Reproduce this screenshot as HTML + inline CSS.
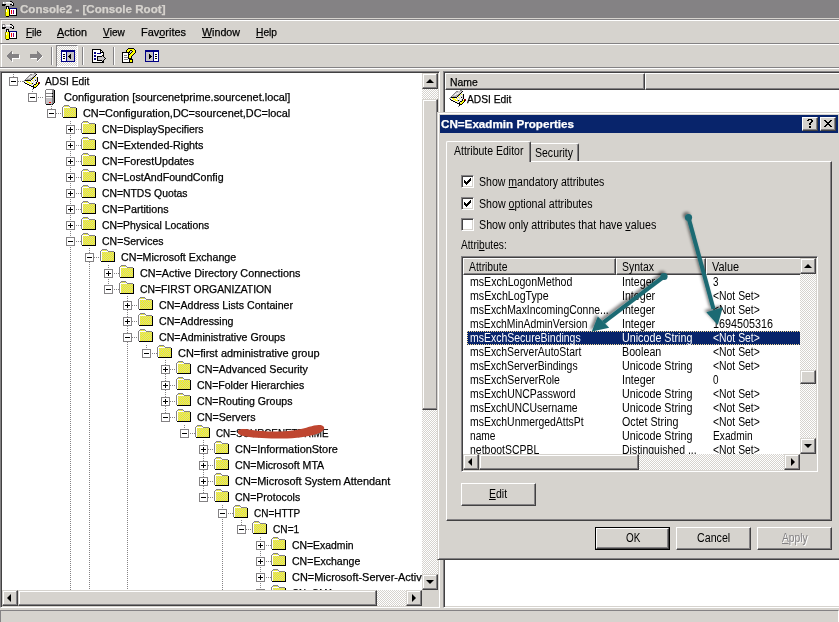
<!DOCTYPE html>
<html><head><meta charset="utf-8"><title>Console2</title>
<style>
*{box-sizing:border-box;margin:0;padding:0}
html,body{width:839px;height:622px;overflow:hidden;background:#D6D3CE}
body{position:relative;font-family:"Liberation Sans",sans-serif;font-size:11px;color:#000;line-height:13px}
#w{position:absolute;left:0;top:0;width:839px;height:622px;overflow:hidden;will-change:transform}
.a{position:absolute}
.t{position:absolute;white-space:pre;height:13px;line-height:13px;transform-origin:0 0;-webkit-text-stroke:.25px currentColor}
u{text-decoration:none;border-bottom:1px solid currentColor;display:inline-block;line-height:10px;height:11px}
.chk{background-image:conic-gradient(#fff 25%,#D6D3CE 0 50%,#fff 0 75%,#D6D3CE 0);background-size:2px 2px}
.btn{position:absolute;background:#D6D3CE;border:1px solid;border-color:#fff #424142 #424142 #fff;box-shadow:inset -1px -1px #848284,inset 1px 1px #D6D3CE}
.sb{position:absolute;width:16px;height:16px;background:#D6D3CE;border:1px solid;border-color:#D6D3CE #424142 #424142 #D6D3CE;box-shadow:inset -1px -1px #848284,inset 1px 1px #fff}
.sunk{position:absolute;border:1px solid;border-color:#848284 #fff #fff #848284;box-shadow:inset 1px 1px #424142,inset -1px -1px #D6D3CE}
.ms{position:absolute;white-space:pre;font-size:12.5px;line-height:14px;height:14px;transform-origin:0 0;transform:scaleX(.87)}
.vl{position:absolute;width:1px;background-image:linear-gradient(#848284 50%,transparent 0);background-size:1px 2px}
.hl{position:absolute;height:1px;background-image:linear-gradient(90deg,#848284 50%,transparent 0);background-size:2px 1px}
.bx{position:absolute;width:9px;height:9px;border:1px solid #848284;background:#fff}
.bx i{position:absolute;left:1px;top:3px;width:5px;height:1px;background:#000}
.bx b{position:absolute;left:3px;top:1px;width:1px;height:5px;background:#000}
.sep{position:absolute;width:2px;border-left:1px solid #848284;border-right:1px solid #fff}
.ar{position:absolute;width:0;height:0;border:4px solid transparent}
</style></head>
<body><div id="w">
<div class="a" style="left:0;top:0;width:839px;height:18px;background:#848284"></div>
<svg class="a" style="left:2px;top:1px" width="16" height="16" viewBox="0 0 16 16" shape-rendering="crispEdges"><path fill="#848284" d="M0 0h3v1h-3zM0 1h1v1h-1zM0 2h1v1h-1z"/><path fill="#000000" d="M8 0h2v1h-2zM10 1h1v1h-1zM11 2h1v1h-1zM0 3h4v1h-4zM8 3h2v1h-2zM11 3h1v1h-1zM0 4h3v1h-3zM10 4h2v1h-2zM4 5h3v1h-3zM4 6h1v1h-1zM6 6h1v1h-1zM4 7h1v1h-1zM6 7h1v1h-1zM7 8h1v1h-1zM14 8h1v1h-1zM7 9h1v1h-1zM14 9h1v1h-1zM7 10h1v1h-1zM14 10h1v1h-1zM7 11h1v1h-1zM14 11h1v1h-1zM7 12h1v1h-1zM14 12h1v1h-1zM7 13h1v1h-1zM14 13h1v1h-1zM7 14h8v1h-8zM4 15h3v1h-3z"/><path fill="#FFFFFF" d="M1 1h1v1h-1zM4 1h5v1h-5zM1 2h1v1h-1zM10 2h1v1h-1zM10 3h1v1h-1zM5 6h1v1h-1zM5 7h1v1h-1zM8 8h6v1h-6zM4 9h1v1h-1zM8 9h1v1h-1zM10 9h1v1h-1zM12 9h2v1h-2zM4 10h1v1h-1zM8 10h1v1h-1zM10 10h1v1h-1zM12 10h2v1h-2zM8 11h1v1h-1zM10 11h1v1h-1zM12 11h2v1h-2zM8 12h1v1h-1zM10 12h1v1h-1zM12 12h2v1h-2zM8 13h6v1h-6z"/><path fill="#C6C3C6" d="M2 1h2v1h-2zM9 1h1v1h-1zM2 2h2v1h-2zM8 2h2v1h-2zM4 3h4v1h-4zM4 4h4v1h-4z"/><path fill="#DCDCDC" d="M4 2h4v1h-4z"/><path fill="#000084" d="M7 7h8v1h-8z"/><path fill="#848200" d="M3 8h1v1h-1zM3 9h1v1h-1zM3 10h1v1h-1zM3 11h1v1h-1zM3 12h1v1h-1zM3 13h1v1h-1zM3 14h1v1h-1z"/><path fill="#FFFF00" d="M4 8h3v1h-3zM5 9h2v1h-2zM5 10h2v1h-2zM4 11h3v1h-3zM4 12h3v1h-3zM4 13h3v1h-3zM4 14h3v1h-3z"/><path fill="#FF0000" d="M9 9h1v1h-1zM9 10h1v1h-1zM9 11h1v1h-1zM9 12h1v1h-1z"/><path fill="#840084" d="M11 9h1v1h-1zM11 10h1v1h-1zM11 11h1v1h-1zM11 12h1v1h-1z"/></svg>
<div class="t" style="left:20px;top:3px;font-weight:700;transform:scaleX(1.0535);color:#D6D3CE">Console2 - [Console Root]</div>
<div class="a" style="left:0;top:19px;width:839px;height:1px;background:#848284"></div>
<div class="a" style="left:1px;top:20px;width:838px;height:1px;background:#fff"></div>
<div class="a" style="left:1px;top:20px;width:1px;height:47px;background:#fff"></div>
<div class="a" style="left:0;top:43px;width:839px;height:1px;background:#848284"></div>
<div class="a" style="left:1px;top:44px;width:838px;height:1px;background:#fff"></div>
<div class="a" style="left:0;top:67px;width:839px;height:1px;background:#848284"></div>
<div class="a" style="left:0;top:68px;width:839px;height:1px;background:#fff"></div>
<svg class="a" style="left:2px;top:24px" width="16" height="16" viewBox="0 0 16 16" shape-rendering="crispEdges"><path fill="#848284" d="M0 0h3v1h-3zM0 1h1v1h-1zM0 2h1v1h-1z"/><path fill="#000000" d="M8 0h2v1h-2zM10 1h1v1h-1zM11 2h1v1h-1zM0 3h4v1h-4zM8 3h2v1h-2zM11 3h1v1h-1zM0 4h3v1h-3zM10 4h2v1h-2zM4 5h3v1h-3zM4 6h1v1h-1zM6 6h1v1h-1zM4 7h1v1h-1zM6 7h1v1h-1zM7 8h1v1h-1zM14 8h1v1h-1zM7 9h1v1h-1zM14 9h1v1h-1zM7 10h1v1h-1zM14 10h1v1h-1zM7 11h1v1h-1zM14 11h1v1h-1zM7 12h1v1h-1zM14 12h1v1h-1zM7 13h1v1h-1zM14 13h1v1h-1zM7 14h8v1h-8zM4 15h3v1h-3z"/><path fill="#FFFFFF" d="M1 1h1v1h-1zM4 1h5v1h-5zM1 2h1v1h-1zM10 2h1v1h-1zM10 3h1v1h-1zM5 6h1v1h-1zM5 7h1v1h-1zM8 8h6v1h-6zM4 9h1v1h-1zM8 9h1v1h-1zM10 9h1v1h-1zM12 9h2v1h-2zM4 10h1v1h-1zM8 10h1v1h-1zM10 10h1v1h-1zM12 10h2v1h-2zM8 11h1v1h-1zM10 11h1v1h-1zM12 11h2v1h-2zM8 12h1v1h-1zM10 12h1v1h-1zM12 12h2v1h-2zM8 13h6v1h-6z"/><path fill="#C6C3C6" d="M2 1h2v1h-2zM9 1h1v1h-1zM2 2h2v1h-2zM8 2h2v1h-2zM4 3h4v1h-4zM4 4h4v1h-4z"/><path fill="#DCDCDC" d="M4 2h4v1h-4z"/><path fill="#000084" d="M7 7h8v1h-8z"/><path fill="#848200" d="M3 8h1v1h-1zM3 9h1v1h-1zM3 10h1v1h-1zM3 11h1v1h-1zM3 12h1v1h-1zM3 13h1v1h-1zM3 14h1v1h-1z"/><path fill="#FFFF00" d="M4 8h3v1h-3zM5 9h2v1h-2zM5 10h2v1h-2zM4 11h3v1h-3zM4 12h3v1h-3zM4 13h3v1h-3zM4 14h3v1h-3z"/><path fill="#FF0000" d="M9 9h1v1h-1zM9 10h1v1h-1zM9 11h1v1h-1zM9 12h1v1h-1z"/><path fill="#840084" d="M11 9h1v1h-1zM11 10h1v1h-1zM11 11h1v1h-1zM11 12h1v1h-1z"/></svg>
<div class="t" style="left:26px;top:26px;transform:scaleX(0.8853);"><u>F</u>ile</div>
<div class="t" style="left:57px;top:26px;transform:scaleX(0.9811);"><u>A</u>ction</div>
<div class="t" style="left:103px;top:26px;transform:scaleX(0.9131);"><u>V</u>iew</div>
<div class="t" style="left:141px;top:26px;transform:scaleX(0.9945);">Fav<u>o</u>rites</div>
<div class="t" style="left:202px;top:26px;transform:scaleX(0.9712);"><u>W</u>indow</div>
<div class="t" style="left:256px;top:26px;transform:scaleX(0.9282);"><u>H</u>elp</div>
<svg class="a" style="left:7px;top:51px" width="13" height="11" viewBox="0 0 13 11" shape-rendering="crispEdges"><path fill="#848284" d="M4 0h1v1h-1zM3 1h2v1h-2zM2 2h3v1h-3zM1 3h11v1h-11zM0 4h12v1h-12zM0 5h12v1h-12zM1 6h11v1h-11zM2 7h3v1h-3zM3 8h2v1h-2zM4 9h1v1h-1z"/><path fill="#FFFFFF" d="M5 1h1v1h-1zM5 2h1v1h-1zM12 4h1v1h-1zM12 5h1v1h-1zM12 6h1v1h-1zM5 7h8v1h-8zM5 8h1v1h-1zM5 9h1v1h-1zM5 10h1v1h-1z"/></svg>
<svg class="a" style="left:30px;top:51px" width="13" height="11" viewBox="0 0 13 11" shape-rendering="crispEdges"><path fill="#848284" d="M7 0h1v1h-1zM7 1h2v1h-2zM7 2h3v1h-3zM0 3h11v1h-11zM0 4h12v1h-12zM0 5h12v1h-12zM0 6h11v1h-11zM7 7h3v1h-3zM7 8h2v1h-2zM7 9h1v1h-1z"/><path fill="#FFFFFF" d="M12 5h1v1h-1zM11 6h1v1h-1zM1 7h6v1h-6zM10 7h1v1h-1zM9 8h1v1h-1zM8 9h1v1h-1zM7 10h1v1h-1z"/></svg>
<div class="sep" style="left:51px;top:47px;height:18px"></div>
<div class="a chk" style="left:56px;top:45px;width:22px;height:22px;border:1px solid;border-color:#848284 #fff #fff #848284"></div>
<svg class="a" style="left:61px;top:50px" width="14" height="12" viewBox="0 0 14 12" shape-rendering="crispEdges"><path fill="#000084" d="M0 0h14v1h-14zM0 1h14v1h-14zM0 2h1v1h-1zM5 2h1v1h-1zM13 2h1v1h-1zM0 3h1v1h-1zM5 3h1v1h-1zM13 3h1v1h-1zM0 4h1v1h-1zM5 4h1v1h-1zM13 4h1v1h-1zM0 5h1v1h-1zM5 5h1v1h-1zM13 5h1v1h-1zM0 6h1v1h-1zM5 6h1v1h-1zM13 6h1v1h-1zM0 7h1v1h-1zM5 7h1v1h-1zM13 7h1v1h-1zM0 8h1v1h-1zM5 8h1v1h-1zM13 8h1v1h-1zM0 9h1v1h-1zM5 9h1v1h-1zM13 9h1v1h-1zM0 10h1v1h-1zM5 10h1v1h-1zM13 10h1v1h-1zM0 11h14v1h-14z"/><path fill="#FFFFFF" d="M1 2h4v1h-4zM1 3h4v1h-4zM1 4h1v1h-1zM4 4h1v1h-1zM1 5h4v1h-4zM1 6h1v1h-1zM4 6h1v1h-1zM1 7h4v1h-4zM1 8h1v1h-1zM4 8h1v1h-1zM1 9h4v1h-4zM1 10h4v1h-4z"/><path fill="#C6C3C6" d="M6 2h7v1h-7zM6 3h7v1h-7zM6 4h3v1h-3zM10 4h3v1h-3zM6 5h2v1h-2zM10 5h3v1h-3zM6 6h1v1h-1zM10 6h3v1h-3zM6 7h2v1h-2zM10 7h3v1h-3zM6 8h3v1h-3zM10 8h3v1h-3zM6 9h7v1h-7zM6 10h7v1h-7z"/><path fill="#000000" d="M2 4h2v1h-2zM9 4h1v1h-1zM8 5h2v1h-2zM2 6h2v1h-2zM7 6h3v1h-3zM8 7h2v1h-2zM2 8h2v1h-2zM9 8h1v1h-1z"/></svg>
<div class="sep" style="left:82px;top:47px;height:18px"></div>
<svg class="a" style="left:92px;top:49px" width="14" height="14" viewBox="0 0 14 14" shape-rendering="crispEdges"><path fill="#000000" d="M0 0h9v1h-9zM0 1h1v1h-1zM8 1h2v1h-2zM0 2h1v1h-1zM8 2h1v1h-1zM10 2h1v1h-1zM0 3h1v1h-1zM8 3h4v1h-4zM0 4h1v1h-1zM11 4h1v1h-1zM0 5h1v1h-1zM11 5h1v1h-1zM0 6h1v1h-1zM10 6h2v1h-2zM0 7h1v1h-1zM5 7h5v1h-5zM11 7h1v1h-1zM0 8h1v1h-1zM5 8h1v1h-1zM12 8h1v1h-1zM0 9h1v1h-1zM5 9h1v1h-1zM13 9h1v1h-1zM0 10h1v1h-1zM5 10h1v1h-1zM12 10h1v1h-1zM0 11h1v1h-1zM5 11h5v1h-5zM11 11h1v1h-1zM0 12h1v1h-1zM10 12h2v1h-2zM0 13h12v1h-12z"/><path fill="#FFFFFF" d="M1 1h7v1h-7zM1 2h7v1h-7zM9 2h1v1h-1zM1 3h1v1h-1zM4 3h4v1h-4zM1 4h1v1h-1zM4 4h1v1h-1zM9 4h2v1h-2zM1 5h10v1h-10zM1 6h1v1h-1zM4 6h6v1h-6zM1 7h1v1h-1zM4 7h1v1h-1zM1 8h4v1h-4zM1 9h1v1h-1zM4 9h1v1h-1zM1 10h1v1h-1zM4 10h1v1h-1zM1 11h4v1h-4zM1 12h9v1h-9z"/><path fill="#000084" d="M2 3h2v1h-2zM2 4h2v1h-2zM5 4h4v1h-4zM2 6h2v1h-2zM2 7h2v1h-2zM2 9h2v1h-2zM2 10h2v1h-2z"/><path fill="#C6C3C6" d="M10 7h1v1h-1zM6 8h6v1h-6zM6 9h7v1h-7zM6 10h6v1h-6zM10 11h1v1h-1z"/></svg>
<div class="sep" style="left:113px;top:47px;height:18px"></div>
<svg class="a" style="left:122px;top:48px" width="15" height="15" viewBox="0 0 15 15" shape-rendering="crispEdges"><path fill="#000000" d="M6 0h6v1h-6zM5 1h1v1h-1zM12 1h1v1h-1zM4 2h1v1h-1zM8 2h2v1h-2zM13 2h1v1h-1zM4 3h1v1h-1zM7 3h1v1h-1zM10 3h1v1h-1zM13 3h1v1h-1zM0 4h8v1h-8zM9 4h1v1h-1zM13 4h1v1h-1zM0 5h1v1h-1zM6 5h1v1h-1zM8 5h1v1h-1zM12 5h1v1h-1zM0 6h1v1h-1zM6 6h2v1h-2zM11 6h1v1h-1zM0 7h1v1h-1zM6 7h1v1h-1zM10 7h1v1h-1zM0 8h1v1h-1zM6 8h1v1h-1zM9 8h1v1h-1zM0 9h1v1h-1zM6 9h1v1h-1zM9 9h1v1h-1zM0 10h1v1h-1zM6 10h4v1h-4zM0 11h1v1h-1zM7 11h4v1h-4zM0 12h1v1h-1zM7 12h1v1h-1zM10 12h1v1h-1zM0 13h1v1h-1zM7 13h1v1h-1zM10 13h1v1h-1zM0 14h11v1h-11z"/><path fill="#FFFF00" d="M6 1h6v1h-6zM5 2h3v1h-3zM10 2h3v1h-3zM5 3h2v1h-2zM11 3h2v1h-2zM10 4h3v1h-3zM9 5h3v1h-3zM8 6h3v1h-3zM7 7h3v1h-3zM7 8h2v1h-2zM7 9h2v1h-2zM8 12h2v1h-2zM8 13h2v1h-2z"/><path fill="#FFFFFF" d="M1 5h5v1h-5zM1 6h5v1h-5zM1 7h1v1h-1zM5 7h1v1h-1zM1 8h5v1h-5zM1 9h1v1h-1zM1 10h5v1h-5zM1 11h1v1h-1zM6 11h1v1h-1zM1 12h6v1h-6zM1 13h6v1h-6z"/><path fill="#848284" d="M2 7h3v1h-3zM2 9h4v1h-4zM2 11h4v1h-4z"/></svg>
<svg class="a" style="left:145px;top:50px" width="14" height="12" viewBox="0 0 14 12" shape-rendering="crispEdges"><path fill="#000084" d="M0 0h14v1h-14zM0 1h14v1h-14zM0 2h1v1h-1zM8 2h1v1h-1zM13 2h1v1h-1zM0 3h1v1h-1zM8 3h1v1h-1zM13 3h1v1h-1zM0 4h1v1h-1zM8 4h1v1h-1zM13 4h1v1h-1zM0 5h1v1h-1zM8 5h1v1h-1zM13 5h1v1h-1zM0 6h1v1h-1zM8 6h1v1h-1zM13 6h1v1h-1zM0 7h1v1h-1zM8 7h1v1h-1zM13 7h1v1h-1zM0 8h1v1h-1zM8 8h1v1h-1zM13 8h1v1h-1zM0 9h1v1h-1zM8 9h1v1h-1zM13 9h1v1h-1zM0 10h1v1h-1zM8 10h1v1h-1zM13 10h1v1h-1zM0 11h14v1h-14z"/><path fill="#C6C3C6" d="M1 2h7v1h-7zM1 3h7v1h-7zM1 4h3v1h-3zM5 4h3v1h-3zM1 5h3v1h-3zM6 5h2v1h-2zM1 6h3v1h-3zM7 6h1v1h-1zM1 7h3v1h-3zM6 7h2v1h-2zM1 8h3v1h-3zM5 8h3v1h-3zM1 9h7v1h-7zM1 10h7v1h-7z"/><path fill="#FFFFFF" d="M9 2h4v1h-4zM9 3h4v1h-4zM9 4h1v1h-1zM12 4h1v1h-1zM9 5h4v1h-4zM9 6h1v1h-1zM12 6h1v1h-1zM9 7h4v1h-4zM9 8h1v1h-1zM12 8h1v1h-1zM9 9h4v1h-4zM9 10h4v1h-4z"/><path fill="#000000" d="M4 4h1v1h-1zM10 4h2v1h-2zM4 5h2v1h-2zM4 6h3v1h-3zM10 6h2v1h-2zM4 7h2v1h-2zM4 8h1v1h-1zM10 8h2v1h-2z"/></svg>
<div class="a" style="left:0;top:71px;width:440px;height:537px;background:#fff;border:1px solid;border-color:#848284 #fff #fff #848284;box-shadow:inset 1px 1px #424142,inset -1px -1px #D6D3CE"></div>
<div class="a" style="left:2px;top:73px;width:420px;height:517px;overflow:hidden">
<div class="hl" style="left:16px;top:8px;width:6px"></div>
<div class="vl" style="left:11px;top:1px;height:3px"></div>
<div class="bx" style="left:7px;top:4px"><i></i></div>
<svg class="a" style="left:21px;top:0px" width="17" height="17" viewBox="0 0 17 17" shape-rendering="crispEdges"><path fill="#848284" d="M11 0h2v1h-2zM7 1h2v1h-2zM6 2h1v1h-1zM5 3h1v1h-1zM4 4h1v1h-1zM3 5h1v1h-1zM2 6h1v1h-1zM1 7h1v1h-1zM0 8h1v1h-1zM9 16h1v1h-1z"/><path fill="#C6C3C6" d="M9 1h4v1h-4zM7 2h2v1h-2zM10 2h1v1h-1zM6 3h1v1h-1zM10 3h1v1h-1zM5 4h1v1h-1zM8 4h1v1h-1zM4 5h1v1h-1zM6 5h1v1h-1zM3 6h1v1h-1zM7 6h1v1h-1z"/><path fill="#000000" d="M13 1h1v1h-1zM12 2h1v1h-1zM11 3h1v1h-1zM10 4h1v1h-1zM14 4h1v1h-1zM9 5h1v1h-1zM14 5h1v1h-1zM8 6h1v1h-1zM14 6h1v1h-1zM2 7h6v1h-6zM12 7h1v1h-1zM14 7h1v1h-1zM14 8h1v1h-1zM1 9h1v1h-1zM13 9h1v1h-1zM2 10h2v1h-2zM9 10h1v1h-1zM13 10h1v1h-1zM15 10h1v1h-1zM4 11h2v1h-2zM11 11h2v1h-2zM15 11h1v1h-1zM6 12h2v1h-2zM10 12h1v1h-1zM14 12h1v1h-1zM8 13h3v1h-3zM13 13h1v1h-1zM10 14h3v1h-3zM10 15h1v1h-1z"/><path fill="#DCDCDC" d="M9 2h1v1h-1zM11 2h1v1h-1zM7 3h1v1h-1zM9 3h1v1h-1zM12 3h1v1h-1zM7 4h1v1h-1zM11 4h1v1h-1zM13 4h1v1h-1zM5 5h1v1h-1zM11 5h1v1h-1zM13 5h1v1h-1zM9 6h1v1h-1zM11 6h3v1h-3zM10 7h1v1h-1zM13 7h1v1h-1zM1 8h1v1h-1zM5 8h1v1h-1zM8 8h1v1h-1zM10 8h2v1h-2zM13 8h1v1h-1zM2 9h1v1h-1zM8 9h1v1h-1zM10 9h1v1h-1zM12 9h1v1h-1zM4 10h1v1h-1zM10 10h1v1h-1zM12 10h1v1h-1zM6 11h1v1h-1zM8 11h2v1h-2zM8 12h1v1h-1zM11 12h1v1h-1z"/><path fill="#FFFFFF" d="M8 3h1v1h-1zM13 3h1v1h-1zM6 4h1v1h-1zM12 5h1v1h-1zM10 6h1v1h-1zM8 7h1v1h-1zM11 7h1v1h-1zM2 8h1v1h-1zM6 8h1v1h-1zM9 8h1v1h-1zM12 8h1v1h-1zM3 9h1v1h-1zM7 9h1v1h-1zM9 9h1v1h-1zM11 9h1v1h-1zM5 10h1v1h-1zM11 10h1v1h-1zM7 11h1v1h-1zM10 11h1v1h-1zM9 12h1v1h-1z"/><path fill="#A0A0A0" d="M9 4h1v1h-1zM7 5h2v1h-2zM4 6h3v1h-3z"/><path fill="#FFFF00" d="M12 4h1v1h-1zM10 5h1v1h-1zM9 7h1v1h-1zM3 8h2v1h-2zM7 8h1v1h-1zM4 9h3v1h-3zM6 10h3v1h-3zM14 10h1v1h-1zM13 11h2v1h-2zM12 12h2v1h-2zM11 13h2v1h-2z"/><path fill="#840000" d="M15 9h2v1h-2zM16 10h1v1h-1z"/></svg>
<div class="t" style="left:43px;top:2px;transform:scaleX(0.9311);">ADSI Edit</div>
<div class="hl" style="left:36px;top:24px;width:5px"></div>
<div class="vl" style="left:30px;top:16px;height:4px"></div>
<div class="bx" style="left:26px;top:20px"><i></i></div>
<svg class="a" style="left:43px;top:16px" width="11" height="16" viewBox="0 0 11 16" shape-rendering="crispEdges"><path fill="#848284" d="M1 0h8v1h-8zM0 1h1v1h-1zM7 1h2v1h-2zM0 2h1v1h-1zM7 2h2v1h-2zM0 3h1v1h-1zM7 3h2v1h-2zM0 4h7v1h-7zM8 4h1v1h-1zM0 5h1v1h-1zM7 5h2v1h-2zM0 6h1v1h-1zM7 6h2v1h-2zM0 7h7v1h-7zM8 7h1v1h-1zM0 8h1v1h-1zM7 8h2v1h-2zM0 9h1v1h-1zM7 9h2v1h-2zM0 10h1v1h-1zM7 10h2v1h-2zM0 11h1v1h-1zM7 11h2v1h-2zM0 12h1v1h-1zM7 12h2v1h-2zM0 13h1v1h-1zM7 13h2v1h-2zM0 14h1v1h-1zM7 14h1v1h-1z"/><path fill="#FFFFFF" d="M1 1h6v1h-6zM1 2h6v1h-6zM1 3h6v1h-6zM1 5h6v1h-6zM1 6h6v1h-6zM1 8h6v1h-6z"/><path fill="#000000" d="M9 1h1v1h-1zM9 2h1v1h-1zM9 3h1v1h-1zM7 4h1v1h-1zM9 4h1v1h-1zM9 5h1v1h-1zM9 6h1v1h-1zM7 7h1v1h-1zM9 7h1v1h-1zM9 8h1v1h-1zM9 9h1v1h-1zM9 10h1v1h-1zM9 11h1v1h-1zM9 12h1v1h-1zM9 13h1v1h-1zM8 14h1v1h-1zM1 15h7v1h-7z"/><path fill="#C6C3C6" d="M1 9h6v1h-6zM1 10h6v1h-6zM1 11h6v1h-6zM1 12h6v1h-6zM1 13h3v1h-3zM6 13h1v1h-1zM1 14h6v1h-6z"/><path fill="#FF0000" d="M4 13h2v1h-2z"/></svg>
<div class="t" style="left:62px;top:18px;transform:scaleX(0.9949);">Configuration [sourcenetprime.sourcenet.local]</div>
<div class="hl" style="left:54px;top:40px;width:6px"></div>
<div class="vl" style="left:49px;top:31px;height:5px"></div>
<div class="bx" style="left:45px;top:36px"><i></i></div>
<svg class="a" style="left:60px;top:32px" width="15" height="13" viewBox="0 0 15 13" shape-rendering="crispEdges"><path fill="#848284" d="M2 0h5v1h-5zM1 1h1v1h-1zM7 1h1v1h-1zM0 2h1v1h-1zM8 2h6v1h-6zM0 3h1v1h-1zM0 4h1v1h-1zM0 5h1v1h-1zM0 6h1v1h-1zM0 7h1v1h-1zM0 8h1v1h-1zM0 9h1v1h-1zM0 10h1v1h-1zM0 11h1v1h-1z"/><path fill="#CCCCAC" d="M2 1h1v1h-1zM4 1h1v1h-1zM6 1h1v1h-1zM3 3h1v1h-1zM5 3h1v1h-1zM7 3h1v1h-1zM9 3h1v1h-1zM11 3h1v1h-1zM13 3h1v1h-1zM2 4h1v1h-1zM4 4h1v1h-1zM6 4h1v1h-1zM8 4h1v1h-1zM10 4h1v1h-1zM12 4h1v1h-1zM3 5h1v1h-1zM5 5h1v1h-1zM7 5h1v1h-1zM9 5h1v1h-1zM11 5h1v1h-1zM13 5h1v1h-1zM2 6h1v1h-1zM4 6h1v1h-1zM6 6h1v1h-1zM8 6h1v1h-1zM10 6h1v1h-1zM12 6h1v1h-1zM3 7h1v1h-1zM5 7h1v1h-1zM7 7h1v1h-1zM9 7h1v1h-1zM11 7h1v1h-1zM13 7h1v1h-1zM2 8h1v1h-1zM4 8h1v1h-1zM6 8h1v1h-1zM8 8h1v1h-1zM10 8h1v1h-1zM12 8h1v1h-1zM3 9h1v1h-1zM5 9h1v1h-1zM7 9h1v1h-1zM9 9h1v1h-1zM11 9h1v1h-1zM13 9h1v1h-1zM2 10h1v1h-1zM4 10h1v1h-1zM6 10h1v1h-1zM8 10h1v1h-1zM10 10h1v1h-1zM12 10h1v1h-1zM3 11h1v1h-1zM5 11h1v1h-1zM7 11h1v1h-1zM9 11h1v1h-1zM11 11h1v1h-1zM13 11h1v1h-1z"/><path fill="#FFFF00" d="M3 1h1v1h-1zM5 1h1v1h-1zM2 3h1v1h-1zM4 3h1v1h-1zM6 3h1v1h-1zM8 3h1v1h-1zM10 3h1v1h-1zM12 3h1v1h-1zM3 4h1v1h-1zM5 4h1v1h-1zM7 4h1v1h-1zM9 4h1v1h-1zM11 4h1v1h-1zM13 4h1v1h-1zM2 5h1v1h-1zM4 5h1v1h-1zM6 5h1v1h-1zM8 5h1v1h-1zM10 5h1v1h-1zM12 5h1v1h-1zM3 6h1v1h-1zM5 6h1v1h-1zM7 6h1v1h-1zM9 6h1v1h-1zM11 6h1v1h-1zM13 6h1v1h-1zM2 7h1v1h-1zM4 7h1v1h-1zM6 7h1v1h-1zM8 7h1v1h-1zM10 7h1v1h-1zM12 7h1v1h-1zM3 8h1v1h-1zM5 8h1v1h-1zM7 8h1v1h-1zM9 8h1v1h-1zM11 8h1v1h-1zM13 8h1v1h-1zM2 9h1v1h-1zM4 9h1v1h-1zM6 9h1v1h-1zM8 9h1v1h-1zM10 9h1v1h-1zM12 9h1v1h-1zM3 10h1v1h-1zM5 10h1v1h-1zM7 10h1v1h-1zM9 10h1v1h-1zM11 10h1v1h-1zM13 10h1v1h-1zM2 11h1v1h-1zM4 11h1v1h-1zM6 11h1v1h-1zM8 11h1v1h-1zM10 11h1v1h-1zM12 11h1v1h-1z"/><path fill="#FFFFFF" d="M1 2h7v1h-7zM1 3h1v1h-1zM1 4h1v1h-1zM1 5h1v1h-1zM1 6h1v1h-1zM1 7h1v1h-1zM1 8h1v1h-1zM1 9h1v1h-1zM1 10h1v1h-1zM1 11h1v1h-1z"/><path fill="#000000" d="M14 3h1v1h-1zM14 4h1v1h-1zM14 5h1v1h-1zM14 6h1v1h-1zM14 7h1v1h-1zM14 8h1v1h-1zM14 9h1v1h-1zM14 10h1v1h-1zM14 11h1v1h-1zM1 12h14v1h-14z"/></svg>
<div class="t" style="left:81px;top:34px;transform:scaleX(0.9899);">CN=Configuration,DC=sourcenet,DC=local</div>
<div class="hl" style="left:74px;top:56px;width:5px"></div>
<div class="vl" style="left:68px;top:48px;height:4px"></div>
<div class="bx" style="left:64px;top:52px"><i></i><b></b></div>
<svg class="a" style="left:79px;top:48px" width="15" height="13" viewBox="0 0 15 13" shape-rendering="crispEdges"><path fill="#848284" d="M2 0h5v1h-5zM1 1h1v1h-1zM7 1h1v1h-1zM0 2h1v1h-1zM8 2h6v1h-6zM0 3h1v1h-1zM0 4h1v1h-1zM0 5h1v1h-1zM0 6h1v1h-1zM0 7h1v1h-1zM0 8h1v1h-1zM0 9h1v1h-1zM0 10h1v1h-1zM0 11h1v1h-1z"/><path fill="#CCCCAC" d="M2 1h1v1h-1zM4 1h1v1h-1zM6 1h1v1h-1zM3 3h1v1h-1zM5 3h1v1h-1zM7 3h1v1h-1zM9 3h1v1h-1zM11 3h1v1h-1zM13 3h1v1h-1zM2 4h1v1h-1zM4 4h1v1h-1zM6 4h1v1h-1zM8 4h1v1h-1zM10 4h1v1h-1zM12 4h1v1h-1zM3 5h1v1h-1zM5 5h1v1h-1zM7 5h1v1h-1zM9 5h1v1h-1zM11 5h1v1h-1zM13 5h1v1h-1zM2 6h1v1h-1zM4 6h1v1h-1zM6 6h1v1h-1zM8 6h1v1h-1zM10 6h1v1h-1zM12 6h1v1h-1zM3 7h1v1h-1zM5 7h1v1h-1zM7 7h1v1h-1zM9 7h1v1h-1zM11 7h1v1h-1zM13 7h1v1h-1zM2 8h1v1h-1zM4 8h1v1h-1zM6 8h1v1h-1zM8 8h1v1h-1zM10 8h1v1h-1zM12 8h1v1h-1zM3 9h1v1h-1zM5 9h1v1h-1zM7 9h1v1h-1zM9 9h1v1h-1zM11 9h1v1h-1zM13 9h1v1h-1zM2 10h1v1h-1zM4 10h1v1h-1zM6 10h1v1h-1zM8 10h1v1h-1zM10 10h1v1h-1zM12 10h1v1h-1zM3 11h1v1h-1zM5 11h1v1h-1zM7 11h1v1h-1zM9 11h1v1h-1zM11 11h1v1h-1zM13 11h1v1h-1z"/><path fill="#FFFF00" d="M3 1h1v1h-1zM5 1h1v1h-1zM2 3h1v1h-1zM4 3h1v1h-1zM6 3h1v1h-1zM8 3h1v1h-1zM10 3h1v1h-1zM12 3h1v1h-1zM3 4h1v1h-1zM5 4h1v1h-1zM7 4h1v1h-1zM9 4h1v1h-1zM11 4h1v1h-1zM13 4h1v1h-1zM2 5h1v1h-1zM4 5h1v1h-1zM6 5h1v1h-1zM8 5h1v1h-1zM10 5h1v1h-1zM12 5h1v1h-1zM3 6h1v1h-1zM5 6h1v1h-1zM7 6h1v1h-1zM9 6h1v1h-1zM11 6h1v1h-1zM13 6h1v1h-1zM2 7h1v1h-1zM4 7h1v1h-1zM6 7h1v1h-1zM8 7h1v1h-1zM10 7h1v1h-1zM12 7h1v1h-1zM3 8h1v1h-1zM5 8h1v1h-1zM7 8h1v1h-1zM9 8h1v1h-1zM11 8h1v1h-1zM13 8h1v1h-1zM2 9h1v1h-1zM4 9h1v1h-1zM6 9h1v1h-1zM8 9h1v1h-1zM10 9h1v1h-1zM12 9h1v1h-1zM3 10h1v1h-1zM5 10h1v1h-1zM7 10h1v1h-1zM9 10h1v1h-1zM11 10h1v1h-1zM13 10h1v1h-1zM2 11h1v1h-1zM4 11h1v1h-1zM6 11h1v1h-1zM8 11h1v1h-1zM10 11h1v1h-1zM12 11h1v1h-1z"/><path fill="#FFFFFF" d="M1 2h7v1h-7zM1 3h1v1h-1zM1 4h1v1h-1zM1 5h1v1h-1zM1 6h1v1h-1zM1 7h1v1h-1zM1 8h1v1h-1zM1 9h1v1h-1zM1 10h1v1h-1zM1 11h1v1h-1z"/><path fill="#000000" d="M14 3h1v1h-1zM14 4h1v1h-1zM14 5h1v1h-1zM14 6h1v1h-1zM14 7h1v1h-1zM14 8h1v1h-1zM14 9h1v1h-1zM14 10h1v1h-1zM14 11h1v1h-1zM1 12h14v1h-14z"/></svg>
<div class="t" style="left:100px;top:50px;transform:scaleX(0.9514);">CN=DisplaySpecifiers</div>
<div class="hl" style="left:74px;top:72px;width:5px"></div>
<div class="vl" style="left:68px;top:62px;height:6px"></div>
<div class="bx" style="left:64px;top:68px"><i></i><b></b></div>
<svg class="a" style="left:79px;top:64px" width="15" height="13" viewBox="0 0 15 13" shape-rendering="crispEdges"><path fill="#848284" d="M2 0h5v1h-5zM1 1h1v1h-1zM7 1h1v1h-1zM0 2h1v1h-1zM8 2h6v1h-6zM0 3h1v1h-1zM0 4h1v1h-1zM0 5h1v1h-1zM0 6h1v1h-1zM0 7h1v1h-1zM0 8h1v1h-1zM0 9h1v1h-1zM0 10h1v1h-1zM0 11h1v1h-1z"/><path fill="#CCCCAC" d="M2 1h1v1h-1zM4 1h1v1h-1zM6 1h1v1h-1zM3 3h1v1h-1zM5 3h1v1h-1zM7 3h1v1h-1zM9 3h1v1h-1zM11 3h1v1h-1zM13 3h1v1h-1zM2 4h1v1h-1zM4 4h1v1h-1zM6 4h1v1h-1zM8 4h1v1h-1zM10 4h1v1h-1zM12 4h1v1h-1zM3 5h1v1h-1zM5 5h1v1h-1zM7 5h1v1h-1zM9 5h1v1h-1zM11 5h1v1h-1zM13 5h1v1h-1zM2 6h1v1h-1zM4 6h1v1h-1zM6 6h1v1h-1zM8 6h1v1h-1zM10 6h1v1h-1zM12 6h1v1h-1zM3 7h1v1h-1zM5 7h1v1h-1zM7 7h1v1h-1zM9 7h1v1h-1zM11 7h1v1h-1zM13 7h1v1h-1zM2 8h1v1h-1zM4 8h1v1h-1zM6 8h1v1h-1zM8 8h1v1h-1zM10 8h1v1h-1zM12 8h1v1h-1zM3 9h1v1h-1zM5 9h1v1h-1zM7 9h1v1h-1zM9 9h1v1h-1zM11 9h1v1h-1zM13 9h1v1h-1zM2 10h1v1h-1zM4 10h1v1h-1zM6 10h1v1h-1zM8 10h1v1h-1zM10 10h1v1h-1zM12 10h1v1h-1zM3 11h1v1h-1zM5 11h1v1h-1zM7 11h1v1h-1zM9 11h1v1h-1zM11 11h1v1h-1zM13 11h1v1h-1z"/><path fill="#FFFF00" d="M3 1h1v1h-1zM5 1h1v1h-1zM2 3h1v1h-1zM4 3h1v1h-1zM6 3h1v1h-1zM8 3h1v1h-1zM10 3h1v1h-1zM12 3h1v1h-1zM3 4h1v1h-1zM5 4h1v1h-1zM7 4h1v1h-1zM9 4h1v1h-1zM11 4h1v1h-1zM13 4h1v1h-1zM2 5h1v1h-1zM4 5h1v1h-1zM6 5h1v1h-1zM8 5h1v1h-1zM10 5h1v1h-1zM12 5h1v1h-1zM3 6h1v1h-1zM5 6h1v1h-1zM7 6h1v1h-1zM9 6h1v1h-1zM11 6h1v1h-1zM13 6h1v1h-1zM2 7h1v1h-1zM4 7h1v1h-1zM6 7h1v1h-1zM8 7h1v1h-1zM10 7h1v1h-1zM12 7h1v1h-1zM3 8h1v1h-1zM5 8h1v1h-1zM7 8h1v1h-1zM9 8h1v1h-1zM11 8h1v1h-1zM13 8h1v1h-1zM2 9h1v1h-1zM4 9h1v1h-1zM6 9h1v1h-1zM8 9h1v1h-1zM10 9h1v1h-1zM12 9h1v1h-1zM3 10h1v1h-1zM5 10h1v1h-1zM7 10h1v1h-1zM9 10h1v1h-1zM11 10h1v1h-1zM13 10h1v1h-1zM2 11h1v1h-1zM4 11h1v1h-1zM6 11h1v1h-1zM8 11h1v1h-1zM10 11h1v1h-1zM12 11h1v1h-1z"/><path fill="#FFFFFF" d="M1 2h7v1h-7zM1 3h1v1h-1zM1 4h1v1h-1zM1 5h1v1h-1zM1 6h1v1h-1zM1 7h1v1h-1zM1 8h1v1h-1zM1 9h1v1h-1zM1 10h1v1h-1zM1 11h1v1h-1z"/><path fill="#000000" d="M14 3h1v1h-1zM14 4h1v1h-1zM14 5h1v1h-1zM14 6h1v1h-1zM14 7h1v1h-1zM14 8h1v1h-1zM14 9h1v1h-1zM14 10h1v1h-1zM14 11h1v1h-1zM1 12h14v1h-14z"/></svg>
<div class="t" style="left:100px;top:66px;transform:scaleX(0.9793);">CN=Extended-Rights</div>
<div class="hl" style="left:74px;top:88px;width:5px"></div>
<div class="vl" style="left:68px;top:78px;height:6px"></div>
<div class="bx" style="left:64px;top:84px"><i></i><b></b></div>
<svg class="a" style="left:79px;top:80px" width="15" height="13" viewBox="0 0 15 13" shape-rendering="crispEdges"><path fill="#848284" d="M2 0h5v1h-5zM1 1h1v1h-1zM7 1h1v1h-1zM0 2h1v1h-1zM8 2h6v1h-6zM0 3h1v1h-1zM0 4h1v1h-1zM0 5h1v1h-1zM0 6h1v1h-1zM0 7h1v1h-1zM0 8h1v1h-1zM0 9h1v1h-1zM0 10h1v1h-1zM0 11h1v1h-1z"/><path fill="#CCCCAC" d="M2 1h1v1h-1zM4 1h1v1h-1zM6 1h1v1h-1zM3 3h1v1h-1zM5 3h1v1h-1zM7 3h1v1h-1zM9 3h1v1h-1zM11 3h1v1h-1zM13 3h1v1h-1zM2 4h1v1h-1zM4 4h1v1h-1zM6 4h1v1h-1zM8 4h1v1h-1zM10 4h1v1h-1zM12 4h1v1h-1zM3 5h1v1h-1zM5 5h1v1h-1zM7 5h1v1h-1zM9 5h1v1h-1zM11 5h1v1h-1zM13 5h1v1h-1zM2 6h1v1h-1zM4 6h1v1h-1zM6 6h1v1h-1zM8 6h1v1h-1zM10 6h1v1h-1zM12 6h1v1h-1zM3 7h1v1h-1zM5 7h1v1h-1zM7 7h1v1h-1zM9 7h1v1h-1zM11 7h1v1h-1zM13 7h1v1h-1zM2 8h1v1h-1zM4 8h1v1h-1zM6 8h1v1h-1zM8 8h1v1h-1zM10 8h1v1h-1zM12 8h1v1h-1zM3 9h1v1h-1zM5 9h1v1h-1zM7 9h1v1h-1zM9 9h1v1h-1zM11 9h1v1h-1zM13 9h1v1h-1zM2 10h1v1h-1zM4 10h1v1h-1zM6 10h1v1h-1zM8 10h1v1h-1zM10 10h1v1h-1zM12 10h1v1h-1zM3 11h1v1h-1zM5 11h1v1h-1zM7 11h1v1h-1zM9 11h1v1h-1zM11 11h1v1h-1zM13 11h1v1h-1z"/><path fill="#FFFF00" d="M3 1h1v1h-1zM5 1h1v1h-1zM2 3h1v1h-1zM4 3h1v1h-1zM6 3h1v1h-1zM8 3h1v1h-1zM10 3h1v1h-1zM12 3h1v1h-1zM3 4h1v1h-1zM5 4h1v1h-1zM7 4h1v1h-1zM9 4h1v1h-1zM11 4h1v1h-1zM13 4h1v1h-1zM2 5h1v1h-1zM4 5h1v1h-1zM6 5h1v1h-1zM8 5h1v1h-1zM10 5h1v1h-1zM12 5h1v1h-1zM3 6h1v1h-1zM5 6h1v1h-1zM7 6h1v1h-1zM9 6h1v1h-1zM11 6h1v1h-1zM13 6h1v1h-1zM2 7h1v1h-1zM4 7h1v1h-1zM6 7h1v1h-1zM8 7h1v1h-1zM10 7h1v1h-1zM12 7h1v1h-1zM3 8h1v1h-1zM5 8h1v1h-1zM7 8h1v1h-1zM9 8h1v1h-1zM11 8h1v1h-1zM13 8h1v1h-1zM2 9h1v1h-1zM4 9h1v1h-1zM6 9h1v1h-1zM8 9h1v1h-1zM10 9h1v1h-1zM12 9h1v1h-1zM3 10h1v1h-1zM5 10h1v1h-1zM7 10h1v1h-1zM9 10h1v1h-1zM11 10h1v1h-1zM13 10h1v1h-1zM2 11h1v1h-1zM4 11h1v1h-1zM6 11h1v1h-1zM8 11h1v1h-1zM10 11h1v1h-1zM12 11h1v1h-1z"/><path fill="#FFFFFF" d="M1 2h7v1h-7zM1 3h1v1h-1zM1 4h1v1h-1zM1 5h1v1h-1zM1 6h1v1h-1zM1 7h1v1h-1zM1 8h1v1h-1zM1 9h1v1h-1zM1 10h1v1h-1zM1 11h1v1h-1z"/><path fill="#000000" d="M14 3h1v1h-1zM14 4h1v1h-1zM14 5h1v1h-1zM14 6h1v1h-1zM14 7h1v1h-1zM14 8h1v1h-1zM14 9h1v1h-1zM14 10h1v1h-1zM14 11h1v1h-1zM1 12h14v1h-14z"/></svg>
<div class="t" style="left:100px;top:82px;transform:scaleX(0.9760);">CN=ForestUpdates</div>
<div class="hl" style="left:74px;top:104px;width:5px"></div>
<div class="vl" style="left:68px;top:94px;height:6px"></div>
<div class="bx" style="left:64px;top:100px"><i></i><b></b></div>
<svg class="a" style="left:79px;top:96px" width="15" height="13" viewBox="0 0 15 13" shape-rendering="crispEdges"><path fill="#848284" d="M2 0h5v1h-5zM1 1h1v1h-1zM7 1h1v1h-1zM0 2h1v1h-1zM8 2h6v1h-6zM0 3h1v1h-1zM0 4h1v1h-1zM0 5h1v1h-1zM0 6h1v1h-1zM0 7h1v1h-1zM0 8h1v1h-1zM0 9h1v1h-1zM0 10h1v1h-1zM0 11h1v1h-1z"/><path fill="#CCCCAC" d="M2 1h1v1h-1zM4 1h1v1h-1zM6 1h1v1h-1zM3 3h1v1h-1zM5 3h1v1h-1zM7 3h1v1h-1zM9 3h1v1h-1zM11 3h1v1h-1zM13 3h1v1h-1zM2 4h1v1h-1zM4 4h1v1h-1zM6 4h1v1h-1zM8 4h1v1h-1zM10 4h1v1h-1zM12 4h1v1h-1zM3 5h1v1h-1zM5 5h1v1h-1zM7 5h1v1h-1zM9 5h1v1h-1zM11 5h1v1h-1zM13 5h1v1h-1zM2 6h1v1h-1zM4 6h1v1h-1zM6 6h1v1h-1zM8 6h1v1h-1zM10 6h1v1h-1zM12 6h1v1h-1zM3 7h1v1h-1zM5 7h1v1h-1zM7 7h1v1h-1zM9 7h1v1h-1zM11 7h1v1h-1zM13 7h1v1h-1zM2 8h1v1h-1zM4 8h1v1h-1zM6 8h1v1h-1zM8 8h1v1h-1zM10 8h1v1h-1zM12 8h1v1h-1zM3 9h1v1h-1zM5 9h1v1h-1zM7 9h1v1h-1zM9 9h1v1h-1zM11 9h1v1h-1zM13 9h1v1h-1zM2 10h1v1h-1zM4 10h1v1h-1zM6 10h1v1h-1zM8 10h1v1h-1zM10 10h1v1h-1zM12 10h1v1h-1zM3 11h1v1h-1zM5 11h1v1h-1zM7 11h1v1h-1zM9 11h1v1h-1zM11 11h1v1h-1zM13 11h1v1h-1z"/><path fill="#FFFF00" d="M3 1h1v1h-1zM5 1h1v1h-1zM2 3h1v1h-1zM4 3h1v1h-1zM6 3h1v1h-1zM8 3h1v1h-1zM10 3h1v1h-1zM12 3h1v1h-1zM3 4h1v1h-1zM5 4h1v1h-1zM7 4h1v1h-1zM9 4h1v1h-1zM11 4h1v1h-1zM13 4h1v1h-1zM2 5h1v1h-1zM4 5h1v1h-1zM6 5h1v1h-1zM8 5h1v1h-1zM10 5h1v1h-1zM12 5h1v1h-1zM3 6h1v1h-1zM5 6h1v1h-1zM7 6h1v1h-1zM9 6h1v1h-1zM11 6h1v1h-1zM13 6h1v1h-1zM2 7h1v1h-1zM4 7h1v1h-1zM6 7h1v1h-1zM8 7h1v1h-1zM10 7h1v1h-1zM12 7h1v1h-1zM3 8h1v1h-1zM5 8h1v1h-1zM7 8h1v1h-1zM9 8h1v1h-1zM11 8h1v1h-1zM13 8h1v1h-1zM2 9h1v1h-1zM4 9h1v1h-1zM6 9h1v1h-1zM8 9h1v1h-1zM10 9h1v1h-1zM12 9h1v1h-1zM3 10h1v1h-1zM5 10h1v1h-1zM7 10h1v1h-1zM9 10h1v1h-1zM11 10h1v1h-1zM13 10h1v1h-1zM2 11h1v1h-1zM4 11h1v1h-1zM6 11h1v1h-1zM8 11h1v1h-1zM10 11h1v1h-1zM12 11h1v1h-1z"/><path fill="#FFFFFF" d="M1 2h7v1h-7zM1 3h1v1h-1zM1 4h1v1h-1zM1 5h1v1h-1zM1 6h1v1h-1zM1 7h1v1h-1zM1 8h1v1h-1zM1 9h1v1h-1zM1 10h1v1h-1zM1 11h1v1h-1z"/><path fill="#000000" d="M14 3h1v1h-1zM14 4h1v1h-1zM14 5h1v1h-1zM14 6h1v1h-1zM14 7h1v1h-1zM14 8h1v1h-1zM14 9h1v1h-1zM14 10h1v1h-1zM14 11h1v1h-1zM1 12h14v1h-14z"/></svg>
<div class="t" style="left:100px;top:98px;transform:scaleX(0.9676);">CN=LostAndFoundConfig</div>
<div class="hl" style="left:74px;top:120px;width:5px"></div>
<div class="vl" style="left:68px;top:110px;height:6px"></div>
<div class="bx" style="left:64px;top:116px"><i></i><b></b></div>
<svg class="a" style="left:79px;top:112px" width="15" height="13" viewBox="0 0 15 13" shape-rendering="crispEdges"><path fill="#848284" d="M2 0h5v1h-5zM1 1h1v1h-1zM7 1h1v1h-1zM0 2h1v1h-1zM8 2h6v1h-6zM0 3h1v1h-1zM0 4h1v1h-1zM0 5h1v1h-1zM0 6h1v1h-1zM0 7h1v1h-1zM0 8h1v1h-1zM0 9h1v1h-1zM0 10h1v1h-1zM0 11h1v1h-1z"/><path fill="#CCCCAC" d="M2 1h1v1h-1zM4 1h1v1h-1zM6 1h1v1h-1zM3 3h1v1h-1zM5 3h1v1h-1zM7 3h1v1h-1zM9 3h1v1h-1zM11 3h1v1h-1zM13 3h1v1h-1zM2 4h1v1h-1zM4 4h1v1h-1zM6 4h1v1h-1zM8 4h1v1h-1zM10 4h1v1h-1zM12 4h1v1h-1zM3 5h1v1h-1zM5 5h1v1h-1zM7 5h1v1h-1zM9 5h1v1h-1zM11 5h1v1h-1zM13 5h1v1h-1zM2 6h1v1h-1zM4 6h1v1h-1zM6 6h1v1h-1zM8 6h1v1h-1zM10 6h1v1h-1zM12 6h1v1h-1zM3 7h1v1h-1zM5 7h1v1h-1zM7 7h1v1h-1zM9 7h1v1h-1zM11 7h1v1h-1zM13 7h1v1h-1zM2 8h1v1h-1zM4 8h1v1h-1zM6 8h1v1h-1zM8 8h1v1h-1zM10 8h1v1h-1zM12 8h1v1h-1zM3 9h1v1h-1zM5 9h1v1h-1zM7 9h1v1h-1zM9 9h1v1h-1zM11 9h1v1h-1zM13 9h1v1h-1zM2 10h1v1h-1zM4 10h1v1h-1zM6 10h1v1h-1zM8 10h1v1h-1zM10 10h1v1h-1zM12 10h1v1h-1zM3 11h1v1h-1zM5 11h1v1h-1zM7 11h1v1h-1zM9 11h1v1h-1zM11 11h1v1h-1zM13 11h1v1h-1z"/><path fill="#FFFF00" d="M3 1h1v1h-1zM5 1h1v1h-1zM2 3h1v1h-1zM4 3h1v1h-1zM6 3h1v1h-1zM8 3h1v1h-1zM10 3h1v1h-1zM12 3h1v1h-1zM3 4h1v1h-1zM5 4h1v1h-1zM7 4h1v1h-1zM9 4h1v1h-1zM11 4h1v1h-1zM13 4h1v1h-1zM2 5h1v1h-1zM4 5h1v1h-1zM6 5h1v1h-1zM8 5h1v1h-1zM10 5h1v1h-1zM12 5h1v1h-1zM3 6h1v1h-1zM5 6h1v1h-1zM7 6h1v1h-1zM9 6h1v1h-1zM11 6h1v1h-1zM13 6h1v1h-1zM2 7h1v1h-1zM4 7h1v1h-1zM6 7h1v1h-1zM8 7h1v1h-1zM10 7h1v1h-1zM12 7h1v1h-1zM3 8h1v1h-1zM5 8h1v1h-1zM7 8h1v1h-1zM9 8h1v1h-1zM11 8h1v1h-1zM13 8h1v1h-1zM2 9h1v1h-1zM4 9h1v1h-1zM6 9h1v1h-1zM8 9h1v1h-1zM10 9h1v1h-1zM12 9h1v1h-1zM3 10h1v1h-1zM5 10h1v1h-1zM7 10h1v1h-1zM9 10h1v1h-1zM11 10h1v1h-1zM13 10h1v1h-1zM2 11h1v1h-1zM4 11h1v1h-1zM6 11h1v1h-1zM8 11h1v1h-1zM10 11h1v1h-1zM12 11h1v1h-1z"/><path fill="#FFFFFF" d="M1 2h7v1h-7zM1 3h1v1h-1zM1 4h1v1h-1zM1 5h1v1h-1zM1 6h1v1h-1zM1 7h1v1h-1zM1 8h1v1h-1zM1 9h1v1h-1zM1 10h1v1h-1zM1 11h1v1h-1z"/><path fill="#000000" d="M14 3h1v1h-1zM14 4h1v1h-1zM14 5h1v1h-1zM14 6h1v1h-1zM14 7h1v1h-1zM14 8h1v1h-1zM14 9h1v1h-1zM14 10h1v1h-1zM14 11h1v1h-1zM1 12h14v1h-14z"/></svg>
<div class="t" style="left:100px;top:114px;transform:scaleX(0.9418);">CN=NTDS Quotas</div>
<div class="hl" style="left:74px;top:136px;width:5px"></div>
<div class="vl" style="left:68px;top:126px;height:6px"></div>
<div class="bx" style="left:64px;top:132px"><i></i><b></b></div>
<svg class="a" style="left:79px;top:128px" width="15" height="13" viewBox="0 0 15 13" shape-rendering="crispEdges"><path fill="#848284" d="M2 0h5v1h-5zM1 1h1v1h-1zM7 1h1v1h-1zM0 2h1v1h-1zM8 2h6v1h-6zM0 3h1v1h-1zM0 4h1v1h-1zM0 5h1v1h-1zM0 6h1v1h-1zM0 7h1v1h-1zM0 8h1v1h-1zM0 9h1v1h-1zM0 10h1v1h-1zM0 11h1v1h-1z"/><path fill="#CCCCAC" d="M2 1h1v1h-1zM4 1h1v1h-1zM6 1h1v1h-1zM3 3h1v1h-1zM5 3h1v1h-1zM7 3h1v1h-1zM9 3h1v1h-1zM11 3h1v1h-1zM13 3h1v1h-1zM2 4h1v1h-1zM4 4h1v1h-1zM6 4h1v1h-1zM8 4h1v1h-1zM10 4h1v1h-1zM12 4h1v1h-1zM3 5h1v1h-1zM5 5h1v1h-1zM7 5h1v1h-1zM9 5h1v1h-1zM11 5h1v1h-1zM13 5h1v1h-1zM2 6h1v1h-1zM4 6h1v1h-1zM6 6h1v1h-1zM8 6h1v1h-1zM10 6h1v1h-1zM12 6h1v1h-1zM3 7h1v1h-1zM5 7h1v1h-1zM7 7h1v1h-1zM9 7h1v1h-1zM11 7h1v1h-1zM13 7h1v1h-1zM2 8h1v1h-1zM4 8h1v1h-1zM6 8h1v1h-1zM8 8h1v1h-1zM10 8h1v1h-1zM12 8h1v1h-1zM3 9h1v1h-1zM5 9h1v1h-1zM7 9h1v1h-1zM9 9h1v1h-1zM11 9h1v1h-1zM13 9h1v1h-1zM2 10h1v1h-1zM4 10h1v1h-1zM6 10h1v1h-1zM8 10h1v1h-1zM10 10h1v1h-1zM12 10h1v1h-1zM3 11h1v1h-1zM5 11h1v1h-1zM7 11h1v1h-1zM9 11h1v1h-1zM11 11h1v1h-1zM13 11h1v1h-1z"/><path fill="#FFFF00" d="M3 1h1v1h-1zM5 1h1v1h-1zM2 3h1v1h-1zM4 3h1v1h-1zM6 3h1v1h-1zM8 3h1v1h-1zM10 3h1v1h-1zM12 3h1v1h-1zM3 4h1v1h-1zM5 4h1v1h-1zM7 4h1v1h-1zM9 4h1v1h-1zM11 4h1v1h-1zM13 4h1v1h-1zM2 5h1v1h-1zM4 5h1v1h-1zM6 5h1v1h-1zM8 5h1v1h-1zM10 5h1v1h-1zM12 5h1v1h-1zM3 6h1v1h-1zM5 6h1v1h-1zM7 6h1v1h-1zM9 6h1v1h-1zM11 6h1v1h-1zM13 6h1v1h-1zM2 7h1v1h-1zM4 7h1v1h-1zM6 7h1v1h-1zM8 7h1v1h-1zM10 7h1v1h-1zM12 7h1v1h-1zM3 8h1v1h-1zM5 8h1v1h-1zM7 8h1v1h-1zM9 8h1v1h-1zM11 8h1v1h-1zM13 8h1v1h-1zM2 9h1v1h-1zM4 9h1v1h-1zM6 9h1v1h-1zM8 9h1v1h-1zM10 9h1v1h-1zM12 9h1v1h-1zM3 10h1v1h-1zM5 10h1v1h-1zM7 10h1v1h-1zM9 10h1v1h-1zM11 10h1v1h-1zM13 10h1v1h-1zM2 11h1v1h-1zM4 11h1v1h-1zM6 11h1v1h-1zM8 11h1v1h-1zM10 11h1v1h-1zM12 11h1v1h-1z"/><path fill="#FFFFFF" d="M1 2h7v1h-7zM1 3h1v1h-1zM1 4h1v1h-1zM1 5h1v1h-1zM1 6h1v1h-1zM1 7h1v1h-1zM1 8h1v1h-1zM1 9h1v1h-1zM1 10h1v1h-1zM1 11h1v1h-1z"/><path fill="#000000" d="M14 3h1v1h-1zM14 4h1v1h-1zM14 5h1v1h-1zM14 6h1v1h-1zM14 7h1v1h-1zM14 8h1v1h-1zM14 9h1v1h-1zM14 10h1v1h-1zM14 11h1v1h-1zM1 12h14v1h-14z"/></svg>
<div class="t" style="left:100px;top:130px;transform:scaleX(0.9755);">CN=Partitions</div>
<div class="hl" style="left:74px;top:152px;width:5px"></div>
<div class="vl" style="left:68px;top:142px;height:6px"></div>
<div class="bx" style="left:64px;top:148px"><i></i><b></b></div>
<svg class="a" style="left:79px;top:144px" width="15" height="13" viewBox="0 0 15 13" shape-rendering="crispEdges"><path fill="#848284" d="M2 0h5v1h-5zM1 1h1v1h-1zM7 1h1v1h-1zM0 2h1v1h-1zM8 2h6v1h-6zM0 3h1v1h-1zM0 4h1v1h-1zM0 5h1v1h-1zM0 6h1v1h-1zM0 7h1v1h-1zM0 8h1v1h-1zM0 9h1v1h-1zM0 10h1v1h-1zM0 11h1v1h-1z"/><path fill="#CCCCAC" d="M2 1h1v1h-1zM4 1h1v1h-1zM6 1h1v1h-1zM3 3h1v1h-1zM5 3h1v1h-1zM7 3h1v1h-1zM9 3h1v1h-1zM11 3h1v1h-1zM13 3h1v1h-1zM2 4h1v1h-1zM4 4h1v1h-1zM6 4h1v1h-1zM8 4h1v1h-1zM10 4h1v1h-1zM12 4h1v1h-1zM3 5h1v1h-1zM5 5h1v1h-1zM7 5h1v1h-1zM9 5h1v1h-1zM11 5h1v1h-1zM13 5h1v1h-1zM2 6h1v1h-1zM4 6h1v1h-1zM6 6h1v1h-1zM8 6h1v1h-1zM10 6h1v1h-1zM12 6h1v1h-1zM3 7h1v1h-1zM5 7h1v1h-1zM7 7h1v1h-1zM9 7h1v1h-1zM11 7h1v1h-1zM13 7h1v1h-1zM2 8h1v1h-1zM4 8h1v1h-1zM6 8h1v1h-1zM8 8h1v1h-1zM10 8h1v1h-1zM12 8h1v1h-1zM3 9h1v1h-1zM5 9h1v1h-1zM7 9h1v1h-1zM9 9h1v1h-1zM11 9h1v1h-1zM13 9h1v1h-1zM2 10h1v1h-1zM4 10h1v1h-1zM6 10h1v1h-1zM8 10h1v1h-1zM10 10h1v1h-1zM12 10h1v1h-1zM3 11h1v1h-1zM5 11h1v1h-1zM7 11h1v1h-1zM9 11h1v1h-1zM11 11h1v1h-1zM13 11h1v1h-1z"/><path fill="#FFFF00" d="M3 1h1v1h-1zM5 1h1v1h-1zM2 3h1v1h-1zM4 3h1v1h-1zM6 3h1v1h-1zM8 3h1v1h-1zM10 3h1v1h-1zM12 3h1v1h-1zM3 4h1v1h-1zM5 4h1v1h-1zM7 4h1v1h-1zM9 4h1v1h-1zM11 4h1v1h-1zM13 4h1v1h-1zM2 5h1v1h-1zM4 5h1v1h-1zM6 5h1v1h-1zM8 5h1v1h-1zM10 5h1v1h-1zM12 5h1v1h-1zM3 6h1v1h-1zM5 6h1v1h-1zM7 6h1v1h-1zM9 6h1v1h-1zM11 6h1v1h-1zM13 6h1v1h-1zM2 7h1v1h-1zM4 7h1v1h-1zM6 7h1v1h-1zM8 7h1v1h-1zM10 7h1v1h-1zM12 7h1v1h-1zM3 8h1v1h-1zM5 8h1v1h-1zM7 8h1v1h-1zM9 8h1v1h-1zM11 8h1v1h-1zM13 8h1v1h-1zM2 9h1v1h-1zM4 9h1v1h-1zM6 9h1v1h-1zM8 9h1v1h-1zM10 9h1v1h-1zM12 9h1v1h-1zM3 10h1v1h-1zM5 10h1v1h-1zM7 10h1v1h-1zM9 10h1v1h-1zM11 10h1v1h-1zM13 10h1v1h-1zM2 11h1v1h-1zM4 11h1v1h-1zM6 11h1v1h-1zM8 11h1v1h-1zM10 11h1v1h-1zM12 11h1v1h-1z"/><path fill="#FFFFFF" d="M1 2h7v1h-7zM1 3h1v1h-1zM1 4h1v1h-1zM1 5h1v1h-1zM1 6h1v1h-1zM1 7h1v1h-1zM1 8h1v1h-1zM1 9h1v1h-1zM1 10h1v1h-1zM1 11h1v1h-1z"/><path fill="#000000" d="M14 3h1v1h-1zM14 4h1v1h-1zM14 5h1v1h-1zM14 6h1v1h-1zM14 7h1v1h-1zM14 8h1v1h-1zM14 9h1v1h-1zM14 10h1v1h-1zM14 11h1v1h-1zM1 12h14v1h-14z"/></svg>
<div class="t" style="left:100px;top:146px;transform:scaleX(0.9451);">CN=Physical Locations</div>
<div class="hl" style="left:74px;top:168px;width:5px"></div>
<div class="vl" style="left:68px;top:158px;height:6px"></div>
<div class="bx" style="left:64px;top:164px"><i></i></div>
<svg class="a" style="left:79px;top:160px" width="15" height="13" viewBox="0 0 15 13" shape-rendering="crispEdges"><path fill="#848284" d="M2 0h5v1h-5zM1 1h1v1h-1zM7 1h1v1h-1zM0 2h1v1h-1zM8 2h6v1h-6zM0 3h1v1h-1zM0 4h1v1h-1zM0 5h1v1h-1zM0 6h1v1h-1zM0 7h1v1h-1zM0 8h1v1h-1zM0 9h1v1h-1zM0 10h1v1h-1zM0 11h1v1h-1z"/><path fill="#CCCCAC" d="M2 1h1v1h-1zM4 1h1v1h-1zM6 1h1v1h-1zM3 3h1v1h-1zM5 3h1v1h-1zM7 3h1v1h-1zM9 3h1v1h-1zM11 3h1v1h-1zM13 3h1v1h-1zM2 4h1v1h-1zM4 4h1v1h-1zM6 4h1v1h-1zM8 4h1v1h-1zM10 4h1v1h-1zM12 4h1v1h-1zM3 5h1v1h-1zM5 5h1v1h-1zM7 5h1v1h-1zM9 5h1v1h-1zM11 5h1v1h-1zM13 5h1v1h-1zM2 6h1v1h-1zM4 6h1v1h-1zM6 6h1v1h-1zM8 6h1v1h-1zM10 6h1v1h-1zM12 6h1v1h-1zM3 7h1v1h-1zM5 7h1v1h-1zM7 7h1v1h-1zM9 7h1v1h-1zM11 7h1v1h-1zM13 7h1v1h-1zM2 8h1v1h-1zM4 8h1v1h-1zM6 8h1v1h-1zM8 8h1v1h-1zM10 8h1v1h-1zM12 8h1v1h-1zM3 9h1v1h-1zM5 9h1v1h-1zM7 9h1v1h-1zM9 9h1v1h-1zM11 9h1v1h-1zM13 9h1v1h-1zM2 10h1v1h-1zM4 10h1v1h-1zM6 10h1v1h-1zM8 10h1v1h-1zM10 10h1v1h-1zM12 10h1v1h-1zM3 11h1v1h-1zM5 11h1v1h-1zM7 11h1v1h-1zM9 11h1v1h-1zM11 11h1v1h-1zM13 11h1v1h-1z"/><path fill="#FFFF00" d="M3 1h1v1h-1zM5 1h1v1h-1zM2 3h1v1h-1zM4 3h1v1h-1zM6 3h1v1h-1zM8 3h1v1h-1zM10 3h1v1h-1zM12 3h1v1h-1zM3 4h1v1h-1zM5 4h1v1h-1zM7 4h1v1h-1zM9 4h1v1h-1zM11 4h1v1h-1zM13 4h1v1h-1zM2 5h1v1h-1zM4 5h1v1h-1zM6 5h1v1h-1zM8 5h1v1h-1zM10 5h1v1h-1zM12 5h1v1h-1zM3 6h1v1h-1zM5 6h1v1h-1zM7 6h1v1h-1zM9 6h1v1h-1zM11 6h1v1h-1zM13 6h1v1h-1zM2 7h1v1h-1zM4 7h1v1h-1zM6 7h1v1h-1zM8 7h1v1h-1zM10 7h1v1h-1zM12 7h1v1h-1zM3 8h1v1h-1zM5 8h1v1h-1zM7 8h1v1h-1zM9 8h1v1h-1zM11 8h1v1h-1zM13 8h1v1h-1zM2 9h1v1h-1zM4 9h1v1h-1zM6 9h1v1h-1zM8 9h1v1h-1zM10 9h1v1h-1zM12 9h1v1h-1zM3 10h1v1h-1zM5 10h1v1h-1zM7 10h1v1h-1zM9 10h1v1h-1zM11 10h1v1h-1zM13 10h1v1h-1zM2 11h1v1h-1zM4 11h1v1h-1zM6 11h1v1h-1zM8 11h1v1h-1zM10 11h1v1h-1zM12 11h1v1h-1z"/><path fill="#FFFFFF" d="M1 2h7v1h-7zM1 3h1v1h-1zM1 4h1v1h-1zM1 5h1v1h-1zM1 6h1v1h-1zM1 7h1v1h-1zM1 8h1v1h-1zM1 9h1v1h-1zM1 10h1v1h-1zM1 11h1v1h-1z"/><path fill="#000000" d="M14 3h1v1h-1zM14 4h1v1h-1zM14 5h1v1h-1zM14 6h1v1h-1zM14 7h1v1h-1zM14 8h1v1h-1zM14 9h1v1h-1zM14 10h1v1h-1zM14 11h1v1h-1zM1 12h14v1h-14z"/></svg>
<div class="t" style="left:100px;top:162px;transform:scaleX(0.9535);">CN=Services</div>
<div class="hl" style="left:92px;top:184px;width:6px"></div>
<div class="vl" style="left:87px;top:175px;height:5px"></div>
<div class="bx" style="left:83px;top:180px"><i></i></div>
<svg class="a" style="left:98px;top:176px" width="15" height="13" viewBox="0 0 15 13" shape-rendering="crispEdges"><path fill="#848284" d="M2 0h5v1h-5zM1 1h1v1h-1zM7 1h1v1h-1zM0 2h1v1h-1zM8 2h6v1h-6zM0 3h1v1h-1zM0 4h1v1h-1zM0 5h1v1h-1zM0 6h1v1h-1zM0 7h1v1h-1zM0 8h1v1h-1zM0 9h1v1h-1zM0 10h1v1h-1zM0 11h1v1h-1z"/><path fill="#CCCCAC" d="M2 1h1v1h-1zM4 1h1v1h-1zM6 1h1v1h-1zM3 3h1v1h-1zM5 3h1v1h-1zM7 3h1v1h-1zM9 3h1v1h-1zM11 3h1v1h-1zM13 3h1v1h-1zM2 4h1v1h-1zM4 4h1v1h-1zM6 4h1v1h-1zM8 4h1v1h-1zM10 4h1v1h-1zM12 4h1v1h-1zM3 5h1v1h-1zM5 5h1v1h-1zM7 5h1v1h-1zM9 5h1v1h-1zM11 5h1v1h-1zM13 5h1v1h-1zM2 6h1v1h-1zM4 6h1v1h-1zM6 6h1v1h-1zM8 6h1v1h-1zM10 6h1v1h-1zM12 6h1v1h-1zM3 7h1v1h-1zM5 7h1v1h-1zM7 7h1v1h-1zM9 7h1v1h-1zM11 7h1v1h-1zM13 7h1v1h-1zM2 8h1v1h-1zM4 8h1v1h-1zM6 8h1v1h-1zM8 8h1v1h-1zM10 8h1v1h-1zM12 8h1v1h-1zM3 9h1v1h-1zM5 9h1v1h-1zM7 9h1v1h-1zM9 9h1v1h-1zM11 9h1v1h-1zM13 9h1v1h-1zM2 10h1v1h-1zM4 10h1v1h-1zM6 10h1v1h-1zM8 10h1v1h-1zM10 10h1v1h-1zM12 10h1v1h-1zM3 11h1v1h-1zM5 11h1v1h-1zM7 11h1v1h-1zM9 11h1v1h-1zM11 11h1v1h-1zM13 11h1v1h-1z"/><path fill="#FFFF00" d="M3 1h1v1h-1zM5 1h1v1h-1zM2 3h1v1h-1zM4 3h1v1h-1zM6 3h1v1h-1zM8 3h1v1h-1zM10 3h1v1h-1zM12 3h1v1h-1zM3 4h1v1h-1zM5 4h1v1h-1zM7 4h1v1h-1zM9 4h1v1h-1zM11 4h1v1h-1zM13 4h1v1h-1zM2 5h1v1h-1zM4 5h1v1h-1zM6 5h1v1h-1zM8 5h1v1h-1zM10 5h1v1h-1zM12 5h1v1h-1zM3 6h1v1h-1zM5 6h1v1h-1zM7 6h1v1h-1zM9 6h1v1h-1zM11 6h1v1h-1zM13 6h1v1h-1zM2 7h1v1h-1zM4 7h1v1h-1zM6 7h1v1h-1zM8 7h1v1h-1zM10 7h1v1h-1zM12 7h1v1h-1zM3 8h1v1h-1zM5 8h1v1h-1zM7 8h1v1h-1zM9 8h1v1h-1zM11 8h1v1h-1zM13 8h1v1h-1zM2 9h1v1h-1zM4 9h1v1h-1zM6 9h1v1h-1zM8 9h1v1h-1zM10 9h1v1h-1zM12 9h1v1h-1zM3 10h1v1h-1zM5 10h1v1h-1zM7 10h1v1h-1zM9 10h1v1h-1zM11 10h1v1h-1zM13 10h1v1h-1zM2 11h1v1h-1zM4 11h1v1h-1zM6 11h1v1h-1zM8 11h1v1h-1zM10 11h1v1h-1zM12 11h1v1h-1z"/><path fill="#FFFFFF" d="M1 2h7v1h-7zM1 3h1v1h-1zM1 4h1v1h-1zM1 5h1v1h-1zM1 6h1v1h-1zM1 7h1v1h-1zM1 8h1v1h-1zM1 9h1v1h-1zM1 10h1v1h-1zM1 11h1v1h-1z"/><path fill="#000000" d="M14 3h1v1h-1zM14 4h1v1h-1zM14 5h1v1h-1zM14 6h1v1h-1zM14 7h1v1h-1zM14 8h1v1h-1zM14 9h1v1h-1zM14 10h1v1h-1zM14 11h1v1h-1zM1 12h14v1h-14z"/></svg>
<div class="t" style="left:119px;top:178px;transform:scaleX(0.9687);">CN=Microsoft Exchange</div>
<div class="hl" style="left:112px;top:200px;width:5px"></div>
<div class="vl" style="left:106px;top:192px;height:4px"></div>
<div class="bx" style="left:102px;top:196px"><i></i><b></b></div>
<svg class="a" style="left:117px;top:192px" width="15" height="13" viewBox="0 0 15 13" shape-rendering="crispEdges"><path fill="#848284" d="M2 0h5v1h-5zM1 1h1v1h-1zM7 1h1v1h-1zM0 2h1v1h-1zM8 2h6v1h-6zM0 3h1v1h-1zM0 4h1v1h-1zM0 5h1v1h-1zM0 6h1v1h-1zM0 7h1v1h-1zM0 8h1v1h-1zM0 9h1v1h-1zM0 10h1v1h-1zM0 11h1v1h-1z"/><path fill="#CCCCAC" d="M2 1h1v1h-1zM4 1h1v1h-1zM6 1h1v1h-1zM3 3h1v1h-1zM5 3h1v1h-1zM7 3h1v1h-1zM9 3h1v1h-1zM11 3h1v1h-1zM13 3h1v1h-1zM2 4h1v1h-1zM4 4h1v1h-1zM6 4h1v1h-1zM8 4h1v1h-1zM10 4h1v1h-1zM12 4h1v1h-1zM3 5h1v1h-1zM5 5h1v1h-1zM7 5h1v1h-1zM9 5h1v1h-1zM11 5h1v1h-1zM13 5h1v1h-1zM2 6h1v1h-1zM4 6h1v1h-1zM6 6h1v1h-1zM8 6h1v1h-1zM10 6h1v1h-1zM12 6h1v1h-1zM3 7h1v1h-1zM5 7h1v1h-1zM7 7h1v1h-1zM9 7h1v1h-1zM11 7h1v1h-1zM13 7h1v1h-1zM2 8h1v1h-1zM4 8h1v1h-1zM6 8h1v1h-1zM8 8h1v1h-1zM10 8h1v1h-1zM12 8h1v1h-1zM3 9h1v1h-1zM5 9h1v1h-1zM7 9h1v1h-1zM9 9h1v1h-1zM11 9h1v1h-1zM13 9h1v1h-1zM2 10h1v1h-1zM4 10h1v1h-1zM6 10h1v1h-1zM8 10h1v1h-1zM10 10h1v1h-1zM12 10h1v1h-1zM3 11h1v1h-1zM5 11h1v1h-1zM7 11h1v1h-1zM9 11h1v1h-1zM11 11h1v1h-1zM13 11h1v1h-1z"/><path fill="#FFFF00" d="M3 1h1v1h-1zM5 1h1v1h-1zM2 3h1v1h-1zM4 3h1v1h-1zM6 3h1v1h-1zM8 3h1v1h-1zM10 3h1v1h-1zM12 3h1v1h-1zM3 4h1v1h-1zM5 4h1v1h-1zM7 4h1v1h-1zM9 4h1v1h-1zM11 4h1v1h-1zM13 4h1v1h-1zM2 5h1v1h-1zM4 5h1v1h-1zM6 5h1v1h-1zM8 5h1v1h-1zM10 5h1v1h-1zM12 5h1v1h-1zM3 6h1v1h-1zM5 6h1v1h-1zM7 6h1v1h-1zM9 6h1v1h-1zM11 6h1v1h-1zM13 6h1v1h-1zM2 7h1v1h-1zM4 7h1v1h-1zM6 7h1v1h-1zM8 7h1v1h-1zM10 7h1v1h-1zM12 7h1v1h-1zM3 8h1v1h-1zM5 8h1v1h-1zM7 8h1v1h-1zM9 8h1v1h-1zM11 8h1v1h-1zM13 8h1v1h-1zM2 9h1v1h-1zM4 9h1v1h-1zM6 9h1v1h-1zM8 9h1v1h-1zM10 9h1v1h-1zM12 9h1v1h-1zM3 10h1v1h-1zM5 10h1v1h-1zM7 10h1v1h-1zM9 10h1v1h-1zM11 10h1v1h-1zM13 10h1v1h-1zM2 11h1v1h-1zM4 11h1v1h-1zM6 11h1v1h-1zM8 11h1v1h-1zM10 11h1v1h-1zM12 11h1v1h-1z"/><path fill="#FFFFFF" d="M1 2h7v1h-7zM1 3h1v1h-1zM1 4h1v1h-1zM1 5h1v1h-1zM1 6h1v1h-1zM1 7h1v1h-1zM1 8h1v1h-1zM1 9h1v1h-1zM1 10h1v1h-1zM1 11h1v1h-1z"/><path fill="#000000" d="M14 3h1v1h-1zM14 4h1v1h-1zM14 5h1v1h-1zM14 6h1v1h-1zM14 7h1v1h-1zM14 8h1v1h-1zM14 9h1v1h-1zM14 10h1v1h-1zM14 11h1v1h-1zM1 12h14v1h-14z"/></svg>
<div class="t" style="left:138px;top:194px;transform:scaleX(0.9801);">CN=Active Directory Connections</div>
<div class="hl" style="left:112px;top:216px;width:5px"></div>
<div class="vl" style="left:106px;top:206px;height:6px"></div>
<div class="bx" style="left:102px;top:212px"><i></i></div>
<svg class="a" style="left:117px;top:208px" width="15" height="13" viewBox="0 0 15 13" shape-rendering="crispEdges"><path fill="#848284" d="M2 0h5v1h-5zM1 1h1v1h-1zM7 1h1v1h-1zM0 2h1v1h-1zM8 2h6v1h-6zM0 3h1v1h-1zM0 4h1v1h-1zM0 5h1v1h-1zM0 6h1v1h-1zM0 7h1v1h-1zM0 8h1v1h-1zM0 9h1v1h-1zM0 10h1v1h-1zM0 11h1v1h-1z"/><path fill="#CCCCAC" d="M2 1h1v1h-1zM4 1h1v1h-1zM6 1h1v1h-1zM3 3h1v1h-1zM5 3h1v1h-1zM7 3h1v1h-1zM9 3h1v1h-1zM11 3h1v1h-1zM13 3h1v1h-1zM2 4h1v1h-1zM4 4h1v1h-1zM6 4h1v1h-1zM8 4h1v1h-1zM10 4h1v1h-1zM12 4h1v1h-1zM3 5h1v1h-1zM5 5h1v1h-1zM7 5h1v1h-1zM9 5h1v1h-1zM11 5h1v1h-1zM13 5h1v1h-1zM2 6h1v1h-1zM4 6h1v1h-1zM6 6h1v1h-1zM8 6h1v1h-1zM10 6h1v1h-1zM12 6h1v1h-1zM3 7h1v1h-1zM5 7h1v1h-1zM7 7h1v1h-1zM9 7h1v1h-1zM11 7h1v1h-1zM13 7h1v1h-1zM2 8h1v1h-1zM4 8h1v1h-1zM6 8h1v1h-1zM8 8h1v1h-1zM10 8h1v1h-1zM12 8h1v1h-1zM3 9h1v1h-1zM5 9h1v1h-1zM7 9h1v1h-1zM9 9h1v1h-1zM11 9h1v1h-1zM13 9h1v1h-1zM2 10h1v1h-1zM4 10h1v1h-1zM6 10h1v1h-1zM8 10h1v1h-1zM10 10h1v1h-1zM12 10h1v1h-1zM3 11h1v1h-1zM5 11h1v1h-1zM7 11h1v1h-1zM9 11h1v1h-1zM11 11h1v1h-1zM13 11h1v1h-1z"/><path fill="#FFFF00" d="M3 1h1v1h-1zM5 1h1v1h-1zM2 3h1v1h-1zM4 3h1v1h-1zM6 3h1v1h-1zM8 3h1v1h-1zM10 3h1v1h-1zM12 3h1v1h-1zM3 4h1v1h-1zM5 4h1v1h-1zM7 4h1v1h-1zM9 4h1v1h-1zM11 4h1v1h-1zM13 4h1v1h-1zM2 5h1v1h-1zM4 5h1v1h-1zM6 5h1v1h-1zM8 5h1v1h-1zM10 5h1v1h-1zM12 5h1v1h-1zM3 6h1v1h-1zM5 6h1v1h-1zM7 6h1v1h-1zM9 6h1v1h-1zM11 6h1v1h-1zM13 6h1v1h-1zM2 7h1v1h-1zM4 7h1v1h-1zM6 7h1v1h-1zM8 7h1v1h-1zM10 7h1v1h-1zM12 7h1v1h-1zM3 8h1v1h-1zM5 8h1v1h-1zM7 8h1v1h-1zM9 8h1v1h-1zM11 8h1v1h-1zM13 8h1v1h-1zM2 9h1v1h-1zM4 9h1v1h-1zM6 9h1v1h-1zM8 9h1v1h-1zM10 9h1v1h-1zM12 9h1v1h-1zM3 10h1v1h-1zM5 10h1v1h-1zM7 10h1v1h-1zM9 10h1v1h-1zM11 10h1v1h-1zM13 10h1v1h-1zM2 11h1v1h-1zM4 11h1v1h-1zM6 11h1v1h-1zM8 11h1v1h-1zM10 11h1v1h-1zM12 11h1v1h-1z"/><path fill="#FFFFFF" d="M1 2h7v1h-7zM1 3h1v1h-1zM1 4h1v1h-1zM1 5h1v1h-1zM1 6h1v1h-1zM1 7h1v1h-1zM1 8h1v1h-1zM1 9h1v1h-1zM1 10h1v1h-1zM1 11h1v1h-1z"/><path fill="#000000" d="M14 3h1v1h-1zM14 4h1v1h-1zM14 5h1v1h-1zM14 6h1v1h-1zM14 7h1v1h-1zM14 8h1v1h-1zM14 9h1v1h-1zM14 10h1v1h-1zM14 11h1v1h-1zM1 12h14v1h-14z"/></svg>
<div class="t" style="left:138px;top:210px;transform:scaleX(0.9409);">CN=FIRST ORGANIZATION</div>
<div class="hl" style="left:130px;top:232px;width:6px"></div>
<div class="vl" style="left:125px;top:223px;height:5px"></div>
<div class="bx" style="left:121px;top:228px"><i></i><b></b></div>
<svg class="a" style="left:136px;top:224px" width="15" height="13" viewBox="0 0 15 13" shape-rendering="crispEdges"><path fill="#848284" d="M2 0h5v1h-5zM1 1h1v1h-1zM7 1h1v1h-1zM0 2h1v1h-1zM8 2h6v1h-6zM0 3h1v1h-1zM0 4h1v1h-1zM0 5h1v1h-1zM0 6h1v1h-1zM0 7h1v1h-1zM0 8h1v1h-1zM0 9h1v1h-1zM0 10h1v1h-1zM0 11h1v1h-1z"/><path fill="#CCCCAC" d="M2 1h1v1h-1zM4 1h1v1h-1zM6 1h1v1h-1zM3 3h1v1h-1zM5 3h1v1h-1zM7 3h1v1h-1zM9 3h1v1h-1zM11 3h1v1h-1zM13 3h1v1h-1zM2 4h1v1h-1zM4 4h1v1h-1zM6 4h1v1h-1zM8 4h1v1h-1zM10 4h1v1h-1zM12 4h1v1h-1zM3 5h1v1h-1zM5 5h1v1h-1zM7 5h1v1h-1zM9 5h1v1h-1zM11 5h1v1h-1zM13 5h1v1h-1zM2 6h1v1h-1zM4 6h1v1h-1zM6 6h1v1h-1zM8 6h1v1h-1zM10 6h1v1h-1zM12 6h1v1h-1zM3 7h1v1h-1zM5 7h1v1h-1zM7 7h1v1h-1zM9 7h1v1h-1zM11 7h1v1h-1zM13 7h1v1h-1zM2 8h1v1h-1zM4 8h1v1h-1zM6 8h1v1h-1zM8 8h1v1h-1zM10 8h1v1h-1zM12 8h1v1h-1zM3 9h1v1h-1zM5 9h1v1h-1zM7 9h1v1h-1zM9 9h1v1h-1zM11 9h1v1h-1zM13 9h1v1h-1zM2 10h1v1h-1zM4 10h1v1h-1zM6 10h1v1h-1zM8 10h1v1h-1zM10 10h1v1h-1zM12 10h1v1h-1zM3 11h1v1h-1zM5 11h1v1h-1zM7 11h1v1h-1zM9 11h1v1h-1zM11 11h1v1h-1zM13 11h1v1h-1z"/><path fill="#FFFF00" d="M3 1h1v1h-1zM5 1h1v1h-1zM2 3h1v1h-1zM4 3h1v1h-1zM6 3h1v1h-1zM8 3h1v1h-1zM10 3h1v1h-1zM12 3h1v1h-1zM3 4h1v1h-1zM5 4h1v1h-1zM7 4h1v1h-1zM9 4h1v1h-1zM11 4h1v1h-1zM13 4h1v1h-1zM2 5h1v1h-1zM4 5h1v1h-1zM6 5h1v1h-1zM8 5h1v1h-1zM10 5h1v1h-1zM12 5h1v1h-1zM3 6h1v1h-1zM5 6h1v1h-1zM7 6h1v1h-1zM9 6h1v1h-1zM11 6h1v1h-1zM13 6h1v1h-1zM2 7h1v1h-1zM4 7h1v1h-1zM6 7h1v1h-1zM8 7h1v1h-1zM10 7h1v1h-1zM12 7h1v1h-1zM3 8h1v1h-1zM5 8h1v1h-1zM7 8h1v1h-1zM9 8h1v1h-1zM11 8h1v1h-1zM13 8h1v1h-1zM2 9h1v1h-1zM4 9h1v1h-1zM6 9h1v1h-1zM8 9h1v1h-1zM10 9h1v1h-1zM12 9h1v1h-1zM3 10h1v1h-1zM5 10h1v1h-1zM7 10h1v1h-1zM9 10h1v1h-1zM11 10h1v1h-1zM13 10h1v1h-1zM2 11h1v1h-1zM4 11h1v1h-1zM6 11h1v1h-1zM8 11h1v1h-1zM10 11h1v1h-1zM12 11h1v1h-1z"/><path fill="#FFFFFF" d="M1 2h7v1h-7zM1 3h1v1h-1zM1 4h1v1h-1zM1 5h1v1h-1zM1 6h1v1h-1zM1 7h1v1h-1zM1 8h1v1h-1zM1 9h1v1h-1zM1 10h1v1h-1zM1 11h1v1h-1z"/><path fill="#000000" d="M14 3h1v1h-1zM14 4h1v1h-1zM14 5h1v1h-1zM14 6h1v1h-1zM14 7h1v1h-1zM14 8h1v1h-1zM14 9h1v1h-1zM14 10h1v1h-1zM14 11h1v1h-1zM1 12h14v1h-14z"/></svg>
<div class="t" style="left:157px;top:226px;transform:scaleX(0.9634);">CN=Address Lists Container</div>
<div class="hl" style="left:130px;top:248px;width:6px"></div>
<div class="vl" style="left:125px;top:237px;height:7px"></div>
<div class="bx" style="left:121px;top:244px"><i></i><b></b></div>
<svg class="a" style="left:136px;top:240px" width="15" height="13" viewBox="0 0 15 13" shape-rendering="crispEdges"><path fill="#848284" d="M2 0h5v1h-5zM1 1h1v1h-1zM7 1h1v1h-1zM0 2h1v1h-1zM8 2h6v1h-6zM0 3h1v1h-1zM0 4h1v1h-1zM0 5h1v1h-1zM0 6h1v1h-1zM0 7h1v1h-1zM0 8h1v1h-1zM0 9h1v1h-1zM0 10h1v1h-1zM0 11h1v1h-1z"/><path fill="#CCCCAC" d="M2 1h1v1h-1zM4 1h1v1h-1zM6 1h1v1h-1zM3 3h1v1h-1zM5 3h1v1h-1zM7 3h1v1h-1zM9 3h1v1h-1zM11 3h1v1h-1zM13 3h1v1h-1zM2 4h1v1h-1zM4 4h1v1h-1zM6 4h1v1h-1zM8 4h1v1h-1zM10 4h1v1h-1zM12 4h1v1h-1zM3 5h1v1h-1zM5 5h1v1h-1zM7 5h1v1h-1zM9 5h1v1h-1zM11 5h1v1h-1zM13 5h1v1h-1zM2 6h1v1h-1zM4 6h1v1h-1zM6 6h1v1h-1zM8 6h1v1h-1zM10 6h1v1h-1zM12 6h1v1h-1zM3 7h1v1h-1zM5 7h1v1h-1zM7 7h1v1h-1zM9 7h1v1h-1zM11 7h1v1h-1zM13 7h1v1h-1zM2 8h1v1h-1zM4 8h1v1h-1zM6 8h1v1h-1zM8 8h1v1h-1zM10 8h1v1h-1zM12 8h1v1h-1zM3 9h1v1h-1zM5 9h1v1h-1zM7 9h1v1h-1zM9 9h1v1h-1zM11 9h1v1h-1zM13 9h1v1h-1zM2 10h1v1h-1zM4 10h1v1h-1zM6 10h1v1h-1zM8 10h1v1h-1zM10 10h1v1h-1zM12 10h1v1h-1zM3 11h1v1h-1zM5 11h1v1h-1zM7 11h1v1h-1zM9 11h1v1h-1zM11 11h1v1h-1zM13 11h1v1h-1z"/><path fill="#FFFF00" d="M3 1h1v1h-1zM5 1h1v1h-1zM2 3h1v1h-1zM4 3h1v1h-1zM6 3h1v1h-1zM8 3h1v1h-1zM10 3h1v1h-1zM12 3h1v1h-1zM3 4h1v1h-1zM5 4h1v1h-1zM7 4h1v1h-1zM9 4h1v1h-1zM11 4h1v1h-1zM13 4h1v1h-1zM2 5h1v1h-1zM4 5h1v1h-1zM6 5h1v1h-1zM8 5h1v1h-1zM10 5h1v1h-1zM12 5h1v1h-1zM3 6h1v1h-1zM5 6h1v1h-1zM7 6h1v1h-1zM9 6h1v1h-1zM11 6h1v1h-1zM13 6h1v1h-1zM2 7h1v1h-1zM4 7h1v1h-1zM6 7h1v1h-1zM8 7h1v1h-1zM10 7h1v1h-1zM12 7h1v1h-1zM3 8h1v1h-1zM5 8h1v1h-1zM7 8h1v1h-1zM9 8h1v1h-1zM11 8h1v1h-1zM13 8h1v1h-1zM2 9h1v1h-1zM4 9h1v1h-1zM6 9h1v1h-1zM8 9h1v1h-1zM10 9h1v1h-1zM12 9h1v1h-1zM3 10h1v1h-1zM5 10h1v1h-1zM7 10h1v1h-1zM9 10h1v1h-1zM11 10h1v1h-1zM13 10h1v1h-1zM2 11h1v1h-1zM4 11h1v1h-1zM6 11h1v1h-1zM8 11h1v1h-1zM10 11h1v1h-1zM12 11h1v1h-1z"/><path fill="#FFFFFF" d="M1 2h7v1h-7zM1 3h1v1h-1zM1 4h1v1h-1zM1 5h1v1h-1zM1 6h1v1h-1zM1 7h1v1h-1zM1 8h1v1h-1zM1 9h1v1h-1zM1 10h1v1h-1zM1 11h1v1h-1z"/><path fill="#000000" d="M14 3h1v1h-1zM14 4h1v1h-1zM14 5h1v1h-1zM14 6h1v1h-1zM14 7h1v1h-1zM14 8h1v1h-1zM14 9h1v1h-1zM14 10h1v1h-1zM14 11h1v1h-1zM1 12h14v1h-14z"/></svg>
<div class="t" style="left:157px;top:242px;transform:scaleX(0.9632);">CN=Addressing</div>
<div class="hl" style="left:130px;top:264px;width:6px"></div>
<div class="vl" style="left:125px;top:253px;height:7px"></div>
<div class="bx" style="left:121px;top:260px"><i></i></div>
<svg class="a" style="left:136px;top:256px" width="15" height="13" viewBox="0 0 15 13" shape-rendering="crispEdges"><path fill="#848284" d="M2 0h5v1h-5zM1 1h1v1h-1zM7 1h1v1h-1zM0 2h1v1h-1zM8 2h6v1h-6zM0 3h1v1h-1zM0 4h1v1h-1zM0 5h1v1h-1zM0 6h1v1h-1zM0 7h1v1h-1zM0 8h1v1h-1zM0 9h1v1h-1zM0 10h1v1h-1zM0 11h1v1h-1z"/><path fill="#CCCCAC" d="M2 1h1v1h-1zM4 1h1v1h-1zM6 1h1v1h-1zM3 3h1v1h-1zM5 3h1v1h-1zM7 3h1v1h-1zM9 3h1v1h-1zM11 3h1v1h-1zM13 3h1v1h-1zM2 4h1v1h-1zM4 4h1v1h-1zM6 4h1v1h-1zM8 4h1v1h-1zM10 4h1v1h-1zM12 4h1v1h-1zM3 5h1v1h-1zM5 5h1v1h-1zM7 5h1v1h-1zM9 5h1v1h-1zM11 5h1v1h-1zM13 5h1v1h-1zM2 6h1v1h-1zM4 6h1v1h-1zM6 6h1v1h-1zM8 6h1v1h-1zM10 6h1v1h-1zM12 6h1v1h-1zM3 7h1v1h-1zM5 7h1v1h-1zM7 7h1v1h-1zM9 7h1v1h-1zM11 7h1v1h-1zM13 7h1v1h-1zM2 8h1v1h-1zM4 8h1v1h-1zM6 8h1v1h-1zM8 8h1v1h-1zM10 8h1v1h-1zM12 8h1v1h-1zM3 9h1v1h-1zM5 9h1v1h-1zM7 9h1v1h-1zM9 9h1v1h-1zM11 9h1v1h-1zM13 9h1v1h-1zM2 10h1v1h-1zM4 10h1v1h-1zM6 10h1v1h-1zM8 10h1v1h-1zM10 10h1v1h-1zM12 10h1v1h-1zM3 11h1v1h-1zM5 11h1v1h-1zM7 11h1v1h-1zM9 11h1v1h-1zM11 11h1v1h-1zM13 11h1v1h-1z"/><path fill="#FFFF00" d="M3 1h1v1h-1zM5 1h1v1h-1zM2 3h1v1h-1zM4 3h1v1h-1zM6 3h1v1h-1zM8 3h1v1h-1zM10 3h1v1h-1zM12 3h1v1h-1zM3 4h1v1h-1zM5 4h1v1h-1zM7 4h1v1h-1zM9 4h1v1h-1zM11 4h1v1h-1zM13 4h1v1h-1zM2 5h1v1h-1zM4 5h1v1h-1zM6 5h1v1h-1zM8 5h1v1h-1zM10 5h1v1h-1zM12 5h1v1h-1zM3 6h1v1h-1zM5 6h1v1h-1zM7 6h1v1h-1zM9 6h1v1h-1zM11 6h1v1h-1zM13 6h1v1h-1zM2 7h1v1h-1zM4 7h1v1h-1zM6 7h1v1h-1zM8 7h1v1h-1zM10 7h1v1h-1zM12 7h1v1h-1zM3 8h1v1h-1zM5 8h1v1h-1zM7 8h1v1h-1zM9 8h1v1h-1zM11 8h1v1h-1zM13 8h1v1h-1zM2 9h1v1h-1zM4 9h1v1h-1zM6 9h1v1h-1zM8 9h1v1h-1zM10 9h1v1h-1zM12 9h1v1h-1zM3 10h1v1h-1zM5 10h1v1h-1zM7 10h1v1h-1zM9 10h1v1h-1zM11 10h1v1h-1zM13 10h1v1h-1zM2 11h1v1h-1zM4 11h1v1h-1zM6 11h1v1h-1zM8 11h1v1h-1zM10 11h1v1h-1zM12 11h1v1h-1z"/><path fill="#FFFFFF" d="M1 2h7v1h-7zM1 3h1v1h-1zM1 4h1v1h-1zM1 5h1v1h-1zM1 6h1v1h-1zM1 7h1v1h-1zM1 8h1v1h-1zM1 9h1v1h-1zM1 10h1v1h-1zM1 11h1v1h-1z"/><path fill="#000000" d="M14 3h1v1h-1zM14 4h1v1h-1zM14 5h1v1h-1zM14 6h1v1h-1zM14 7h1v1h-1zM14 8h1v1h-1zM14 9h1v1h-1zM14 10h1v1h-1zM14 11h1v1h-1zM1 12h14v1h-14z"/></svg>
<div class="t" style="left:157px;top:258px;transform:scaleX(0.9676);">CN=Administrative Groups</div>
<div class="hl" style="left:150px;top:280px;width:5px"></div>
<div class="vl" style="left:144px;top:272px;height:4px"></div>
<div class="bx" style="left:140px;top:276px"><i></i></div>
<svg class="a" style="left:155px;top:272px" width="15" height="13" viewBox="0 0 15 13" shape-rendering="crispEdges"><path fill="#848284" d="M2 0h5v1h-5zM1 1h1v1h-1zM7 1h1v1h-1zM0 2h1v1h-1zM8 2h6v1h-6zM0 3h1v1h-1zM0 4h1v1h-1zM0 5h1v1h-1zM0 6h1v1h-1zM0 7h1v1h-1zM0 8h1v1h-1zM0 9h1v1h-1zM0 10h1v1h-1zM0 11h1v1h-1z"/><path fill="#CCCCAC" d="M2 1h1v1h-1zM4 1h1v1h-1zM6 1h1v1h-1zM3 3h1v1h-1zM5 3h1v1h-1zM7 3h1v1h-1zM9 3h1v1h-1zM11 3h1v1h-1zM13 3h1v1h-1zM2 4h1v1h-1zM4 4h1v1h-1zM6 4h1v1h-1zM8 4h1v1h-1zM10 4h1v1h-1zM12 4h1v1h-1zM3 5h1v1h-1zM5 5h1v1h-1zM7 5h1v1h-1zM9 5h1v1h-1zM11 5h1v1h-1zM13 5h1v1h-1zM2 6h1v1h-1zM4 6h1v1h-1zM6 6h1v1h-1zM8 6h1v1h-1zM10 6h1v1h-1zM12 6h1v1h-1zM3 7h1v1h-1zM5 7h1v1h-1zM7 7h1v1h-1zM9 7h1v1h-1zM11 7h1v1h-1zM13 7h1v1h-1zM2 8h1v1h-1zM4 8h1v1h-1zM6 8h1v1h-1zM8 8h1v1h-1zM10 8h1v1h-1zM12 8h1v1h-1zM3 9h1v1h-1zM5 9h1v1h-1zM7 9h1v1h-1zM9 9h1v1h-1zM11 9h1v1h-1zM13 9h1v1h-1zM2 10h1v1h-1zM4 10h1v1h-1zM6 10h1v1h-1zM8 10h1v1h-1zM10 10h1v1h-1zM12 10h1v1h-1zM3 11h1v1h-1zM5 11h1v1h-1zM7 11h1v1h-1zM9 11h1v1h-1zM11 11h1v1h-1zM13 11h1v1h-1z"/><path fill="#FFFF00" d="M3 1h1v1h-1zM5 1h1v1h-1zM2 3h1v1h-1zM4 3h1v1h-1zM6 3h1v1h-1zM8 3h1v1h-1zM10 3h1v1h-1zM12 3h1v1h-1zM3 4h1v1h-1zM5 4h1v1h-1zM7 4h1v1h-1zM9 4h1v1h-1zM11 4h1v1h-1zM13 4h1v1h-1zM2 5h1v1h-1zM4 5h1v1h-1zM6 5h1v1h-1zM8 5h1v1h-1zM10 5h1v1h-1zM12 5h1v1h-1zM3 6h1v1h-1zM5 6h1v1h-1zM7 6h1v1h-1zM9 6h1v1h-1zM11 6h1v1h-1zM13 6h1v1h-1zM2 7h1v1h-1zM4 7h1v1h-1zM6 7h1v1h-1zM8 7h1v1h-1zM10 7h1v1h-1zM12 7h1v1h-1zM3 8h1v1h-1zM5 8h1v1h-1zM7 8h1v1h-1zM9 8h1v1h-1zM11 8h1v1h-1zM13 8h1v1h-1zM2 9h1v1h-1zM4 9h1v1h-1zM6 9h1v1h-1zM8 9h1v1h-1zM10 9h1v1h-1zM12 9h1v1h-1zM3 10h1v1h-1zM5 10h1v1h-1zM7 10h1v1h-1zM9 10h1v1h-1zM11 10h1v1h-1zM13 10h1v1h-1zM2 11h1v1h-1zM4 11h1v1h-1zM6 11h1v1h-1zM8 11h1v1h-1zM10 11h1v1h-1zM12 11h1v1h-1z"/><path fill="#FFFFFF" d="M1 2h7v1h-7zM1 3h1v1h-1zM1 4h1v1h-1zM1 5h1v1h-1zM1 6h1v1h-1zM1 7h1v1h-1zM1 8h1v1h-1zM1 9h1v1h-1zM1 10h1v1h-1zM1 11h1v1h-1z"/><path fill="#000000" d="M14 3h1v1h-1zM14 4h1v1h-1zM14 5h1v1h-1zM14 6h1v1h-1zM14 7h1v1h-1zM14 8h1v1h-1zM14 9h1v1h-1zM14 10h1v1h-1zM14 11h1v1h-1zM1 12h14v1h-14z"/></svg>
<div class="t" style="left:176px;top:274px;transform:scaleX(0.9962);">CN=first administrative group</div>
<div class="hl" style="left:168px;top:296px;width:6px"></div>
<div class="vl" style="left:163px;top:287px;height:5px"></div>
<div class="bx" style="left:159px;top:292px"><i></i><b></b></div>
<svg class="a" style="left:174px;top:288px" width="15" height="13" viewBox="0 0 15 13" shape-rendering="crispEdges"><path fill="#848284" d="M2 0h5v1h-5zM1 1h1v1h-1zM7 1h1v1h-1zM0 2h1v1h-1zM8 2h6v1h-6zM0 3h1v1h-1zM0 4h1v1h-1zM0 5h1v1h-1zM0 6h1v1h-1zM0 7h1v1h-1zM0 8h1v1h-1zM0 9h1v1h-1zM0 10h1v1h-1zM0 11h1v1h-1z"/><path fill="#CCCCAC" d="M2 1h1v1h-1zM4 1h1v1h-1zM6 1h1v1h-1zM3 3h1v1h-1zM5 3h1v1h-1zM7 3h1v1h-1zM9 3h1v1h-1zM11 3h1v1h-1zM13 3h1v1h-1zM2 4h1v1h-1zM4 4h1v1h-1zM6 4h1v1h-1zM8 4h1v1h-1zM10 4h1v1h-1zM12 4h1v1h-1zM3 5h1v1h-1zM5 5h1v1h-1zM7 5h1v1h-1zM9 5h1v1h-1zM11 5h1v1h-1zM13 5h1v1h-1zM2 6h1v1h-1zM4 6h1v1h-1zM6 6h1v1h-1zM8 6h1v1h-1zM10 6h1v1h-1zM12 6h1v1h-1zM3 7h1v1h-1zM5 7h1v1h-1zM7 7h1v1h-1zM9 7h1v1h-1zM11 7h1v1h-1zM13 7h1v1h-1zM2 8h1v1h-1zM4 8h1v1h-1zM6 8h1v1h-1zM8 8h1v1h-1zM10 8h1v1h-1zM12 8h1v1h-1zM3 9h1v1h-1zM5 9h1v1h-1zM7 9h1v1h-1zM9 9h1v1h-1zM11 9h1v1h-1zM13 9h1v1h-1zM2 10h1v1h-1zM4 10h1v1h-1zM6 10h1v1h-1zM8 10h1v1h-1zM10 10h1v1h-1zM12 10h1v1h-1zM3 11h1v1h-1zM5 11h1v1h-1zM7 11h1v1h-1zM9 11h1v1h-1zM11 11h1v1h-1zM13 11h1v1h-1z"/><path fill="#FFFF00" d="M3 1h1v1h-1zM5 1h1v1h-1zM2 3h1v1h-1zM4 3h1v1h-1zM6 3h1v1h-1zM8 3h1v1h-1zM10 3h1v1h-1zM12 3h1v1h-1zM3 4h1v1h-1zM5 4h1v1h-1zM7 4h1v1h-1zM9 4h1v1h-1zM11 4h1v1h-1zM13 4h1v1h-1zM2 5h1v1h-1zM4 5h1v1h-1zM6 5h1v1h-1zM8 5h1v1h-1zM10 5h1v1h-1zM12 5h1v1h-1zM3 6h1v1h-1zM5 6h1v1h-1zM7 6h1v1h-1zM9 6h1v1h-1zM11 6h1v1h-1zM13 6h1v1h-1zM2 7h1v1h-1zM4 7h1v1h-1zM6 7h1v1h-1zM8 7h1v1h-1zM10 7h1v1h-1zM12 7h1v1h-1zM3 8h1v1h-1zM5 8h1v1h-1zM7 8h1v1h-1zM9 8h1v1h-1zM11 8h1v1h-1zM13 8h1v1h-1zM2 9h1v1h-1zM4 9h1v1h-1zM6 9h1v1h-1zM8 9h1v1h-1zM10 9h1v1h-1zM12 9h1v1h-1zM3 10h1v1h-1zM5 10h1v1h-1zM7 10h1v1h-1zM9 10h1v1h-1zM11 10h1v1h-1zM13 10h1v1h-1zM2 11h1v1h-1zM4 11h1v1h-1zM6 11h1v1h-1zM8 11h1v1h-1zM10 11h1v1h-1zM12 11h1v1h-1z"/><path fill="#FFFFFF" d="M1 2h7v1h-7zM1 3h1v1h-1zM1 4h1v1h-1zM1 5h1v1h-1zM1 6h1v1h-1zM1 7h1v1h-1zM1 8h1v1h-1zM1 9h1v1h-1zM1 10h1v1h-1zM1 11h1v1h-1z"/><path fill="#000000" d="M14 3h1v1h-1zM14 4h1v1h-1zM14 5h1v1h-1zM14 6h1v1h-1zM14 7h1v1h-1zM14 8h1v1h-1zM14 9h1v1h-1zM14 10h1v1h-1zM14 11h1v1h-1zM1 12h14v1h-14z"/></svg>
<div class="t" style="left:195px;top:290px;transform:scaleX(0.9725);">CN=Advanced Security</div>
<div class="hl" style="left:168px;top:312px;width:6px"></div>
<div class="vl" style="left:163px;top:301px;height:7px"></div>
<div class="bx" style="left:159px;top:308px"><i></i><b></b></div>
<svg class="a" style="left:174px;top:304px" width="15" height="13" viewBox="0 0 15 13" shape-rendering="crispEdges"><path fill="#848284" d="M2 0h5v1h-5zM1 1h1v1h-1zM7 1h1v1h-1zM0 2h1v1h-1zM8 2h6v1h-6zM0 3h1v1h-1zM0 4h1v1h-1zM0 5h1v1h-1zM0 6h1v1h-1zM0 7h1v1h-1zM0 8h1v1h-1zM0 9h1v1h-1zM0 10h1v1h-1zM0 11h1v1h-1z"/><path fill="#CCCCAC" d="M2 1h1v1h-1zM4 1h1v1h-1zM6 1h1v1h-1zM3 3h1v1h-1zM5 3h1v1h-1zM7 3h1v1h-1zM9 3h1v1h-1zM11 3h1v1h-1zM13 3h1v1h-1zM2 4h1v1h-1zM4 4h1v1h-1zM6 4h1v1h-1zM8 4h1v1h-1zM10 4h1v1h-1zM12 4h1v1h-1zM3 5h1v1h-1zM5 5h1v1h-1zM7 5h1v1h-1zM9 5h1v1h-1zM11 5h1v1h-1zM13 5h1v1h-1zM2 6h1v1h-1zM4 6h1v1h-1zM6 6h1v1h-1zM8 6h1v1h-1zM10 6h1v1h-1zM12 6h1v1h-1zM3 7h1v1h-1zM5 7h1v1h-1zM7 7h1v1h-1zM9 7h1v1h-1zM11 7h1v1h-1zM13 7h1v1h-1zM2 8h1v1h-1zM4 8h1v1h-1zM6 8h1v1h-1zM8 8h1v1h-1zM10 8h1v1h-1zM12 8h1v1h-1zM3 9h1v1h-1zM5 9h1v1h-1zM7 9h1v1h-1zM9 9h1v1h-1zM11 9h1v1h-1zM13 9h1v1h-1zM2 10h1v1h-1zM4 10h1v1h-1zM6 10h1v1h-1zM8 10h1v1h-1zM10 10h1v1h-1zM12 10h1v1h-1zM3 11h1v1h-1zM5 11h1v1h-1zM7 11h1v1h-1zM9 11h1v1h-1zM11 11h1v1h-1zM13 11h1v1h-1z"/><path fill="#FFFF00" d="M3 1h1v1h-1zM5 1h1v1h-1zM2 3h1v1h-1zM4 3h1v1h-1zM6 3h1v1h-1zM8 3h1v1h-1zM10 3h1v1h-1zM12 3h1v1h-1zM3 4h1v1h-1zM5 4h1v1h-1zM7 4h1v1h-1zM9 4h1v1h-1zM11 4h1v1h-1zM13 4h1v1h-1zM2 5h1v1h-1zM4 5h1v1h-1zM6 5h1v1h-1zM8 5h1v1h-1zM10 5h1v1h-1zM12 5h1v1h-1zM3 6h1v1h-1zM5 6h1v1h-1zM7 6h1v1h-1zM9 6h1v1h-1zM11 6h1v1h-1zM13 6h1v1h-1zM2 7h1v1h-1zM4 7h1v1h-1zM6 7h1v1h-1zM8 7h1v1h-1zM10 7h1v1h-1zM12 7h1v1h-1zM3 8h1v1h-1zM5 8h1v1h-1zM7 8h1v1h-1zM9 8h1v1h-1zM11 8h1v1h-1zM13 8h1v1h-1zM2 9h1v1h-1zM4 9h1v1h-1zM6 9h1v1h-1zM8 9h1v1h-1zM10 9h1v1h-1zM12 9h1v1h-1zM3 10h1v1h-1zM5 10h1v1h-1zM7 10h1v1h-1zM9 10h1v1h-1zM11 10h1v1h-1zM13 10h1v1h-1zM2 11h1v1h-1zM4 11h1v1h-1zM6 11h1v1h-1zM8 11h1v1h-1zM10 11h1v1h-1zM12 11h1v1h-1z"/><path fill="#FFFFFF" d="M1 2h7v1h-7zM1 3h1v1h-1zM1 4h1v1h-1zM1 5h1v1h-1zM1 6h1v1h-1zM1 7h1v1h-1zM1 8h1v1h-1zM1 9h1v1h-1zM1 10h1v1h-1zM1 11h1v1h-1z"/><path fill="#000000" d="M14 3h1v1h-1zM14 4h1v1h-1zM14 5h1v1h-1zM14 6h1v1h-1zM14 7h1v1h-1zM14 8h1v1h-1zM14 9h1v1h-1zM14 10h1v1h-1zM14 11h1v1h-1zM1 12h14v1h-14z"/></svg>
<div class="t" style="left:195px;top:306px;transform:scaleX(0.9555);">CN=Folder Hierarchies</div>
<div class="hl" style="left:168px;top:328px;width:6px"></div>
<div class="vl" style="left:163px;top:317px;height:7px"></div>
<div class="bx" style="left:159px;top:324px"><i></i><b></b></div>
<svg class="a" style="left:174px;top:320px" width="15" height="13" viewBox="0 0 15 13" shape-rendering="crispEdges"><path fill="#848284" d="M2 0h5v1h-5zM1 1h1v1h-1zM7 1h1v1h-1zM0 2h1v1h-1zM8 2h6v1h-6zM0 3h1v1h-1zM0 4h1v1h-1zM0 5h1v1h-1zM0 6h1v1h-1zM0 7h1v1h-1zM0 8h1v1h-1zM0 9h1v1h-1zM0 10h1v1h-1zM0 11h1v1h-1z"/><path fill="#CCCCAC" d="M2 1h1v1h-1zM4 1h1v1h-1zM6 1h1v1h-1zM3 3h1v1h-1zM5 3h1v1h-1zM7 3h1v1h-1zM9 3h1v1h-1zM11 3h1v1h-1zM13 3h1v1h-1zM2 4h1v1h-1zM4 4h1v1h-1zM6 4h1v1h-1zM8 4h1v1h-1zM10 4h1v1h-1zM12 4h1v1h-1zM3 5h1v1h-1zM5 5h1v1h-1zM7 5h1v1h-1zM9 5h1v1h-1zM11 5h1v1h-1zM13 5h1v1h-1zM2 6h1v1h-1zM4 6h1v1h-1zM6 6h1v1h-1zM8 6h1v1h-1zM10 6h1v1h-1zM12 6h1v1h-1zM3 7h1v1h-1zM5 7h1v1h-1zM7 7h1v1h-1zM9 7h1v1h-1zM11 7h1v1h-1zM13 7h1v1h-1zM2 8h1v1h-1zM4 8h1v1h-1zM6 8h1v1h-1zM8 8h1v1h-1zM10 8h1v1h-1zM12 8h1v1h-1zM3 9h1v1h-1zM5 9h1v1h-1zM7 9h1v1h-1zM9 9h1v1h-1zM11 9h1v1h-1zM13 9h1v1h-1zM2 10h1v1h-1zM4 10h1v1h-1zM6 10h1v1h-1zM8 10h1v1h-1zM10 10h1v1h-1zM12 10h1v1h-1zM3 11h1v1h-1zM5 11h1v1h-1zM7 11h1v1h-1zM9 11h1v1h-1zM11 11h1v1h-1zM13 11h1v1h-1z"/><path fill="#FFFF00" d="M3 1h1v1h-1zM5 1h1v1h-1zM2 3h1v1h-1zM4 3h1v1h-1zM6 3h1v1h-1zM8 3h1v1h-1zM10 3h1v1h-1zM12 3h1v1h-1zM3 4h1v1h-1zM5 4h1v1h-1zM7 4h1v1h-1zM9 4h1v1h-1zM11 4h1v1h-1zM13 4h1v1h-1zM2 5h1v1h-1zM4 5h1v1h-1zM6 5h1v1h-1zM8 5h1v1h-1zM10 5h1v1h-1zM12 5h1v1h-1zM3 6h1v1h-1zM5 6h1v1h-1zM7 6h1v1h-1zM9 6h1v1h-1zM11 6h1v1h-1zM13 6h1v1h-1zM2 7h1v1h-1zM4 7h1v1h-1zM6 7h1v1h-1zM8 7h1v1h-1zM10 7h1v1h-1zM12 7h1v1h-1zM3 8h1v1h-1zM5 8h1v1h-1zM7 8h1v1h-1zM9 8h1v1h-1zM11 8h1v1h-1zM13 8h1v1h-1zM2 9h1v1h-1zM4 9h1v1h-1zM6 9h1v1h-1zM8 9h1v1h-1zM10 9h1v1h-1zM12 9h1v1h-1zM3 10h1v1h-1zM5 10h1v1h-1zM7 10h1v1h-1zM9 10h1v1h-1zM11 10h1v1h-1zM13 10h1v1h-1zM2 11h1v1h-1zM4 11h1v1h-1zM6 11h1v1h-1zM8 11h1v1h-1zM10 11h1v1h-1zM12 11h1v1h-1z"/><path fill="#FFFFFF" d="M1 2h7v1h-7zM1 3h1v1h-1zM1 4h1v1h-1zM1 5h1v1h-1zM1 6h1v1h-1zM1 7h1v1h-1zM1 8h1v1h-1zM1 9h1v1h-1zM1 10h1v1h-1zM1 11h1v1h-1z"/><path fill="#000000" d="M14 3h1v1h-1zM14 4h1v1h-1zM14 5h1v1h-1zM14 6h1v1h-1zM14 7h1v1h-1zM14 8h1v1h-1zM14 9h1v1h-1zM14 10h1v1h-1zM14 11h1v1h-1zM1 12h14v1h-14z"/></svg>
<div class="t" style="left:195px;top:322px;transform:scaleX(0.9612);">CN=Routing Groups</div>
<div class="hl" style="left:168px;top:344px;width:6px"></div>
<div class="vl" style="left:163px;top:333px;height:7px"></div>
<div class="bx" style="left:159px;top:340px"><i></i></div>
<svg class="a" style="left:174px;top:336px" width="15" height="13" viewBox="0 0 15 13" shape-rendering="crispEdges"><path fill="#848284" d="M2 0h5v1h-5zM1 1h1v1h-1zM7 1h1v1h-1zM0 2h1v1h-1zM8 2h6v1h-6zM0 3h1v1h-1zM0 4h1v1h-1zM0 5h1v1h-1zM0 6h1v1h-1zM0 7h1v1h-1zM0 8h1v1h-1zM0 9h1v1h-1zM0 10h1v1h-1zM0 11h1v1h-1z"/><path fill="#CCCCAC" d="M2 1h1v1h-1zM4 1h1v1h-1zM6 1h1v1h-1zM3 3h1v1h-1zM5 3h1v1h-1zM7 3h1v1h-1zM9 3h1v1h-1zM11 3h1v1h-1zM13 3h1v1h-1zM2 4h1v1h-1zM4 4h1v1h-1zM6 4h1v1h-1zM8 4h1v1h-1zM10 4h1v1h-1zM12 4h1v1h-1zM3 5h1v1h-1zM5 5h1v1h-1zM7 5h1v1h-1zM9 5h1v1h-1zM11 5h1v1h-1zM13 5h1v1h-1zM2 6h1v1h-1zM4 6h1v1h-1zM6 6h1v1h-1zM8 6h1v1h-1zM10 6h1v1h-1zM12 6h1v1h-1zM3 7h1v1h-1zM5 7h1v1h-1zM7 7h1v1h-1zM9 7h1v1h-1zM11 7h1v1h-1zM13 7h1v1h-1zM2 8h1v1h-1zM4 8h1v1h-1zM6 8h1v1h-1zM8 8h1v1h-1zM10 8h1v1h-1zM12 8h1v1h-1zM3 9h1v1h-1zM5 9h1v1h-1zM7 9h1v1h-1zM9 9h1v1h-1zM11 9h1v1h-1zM13 9h1v1h-1zM2 10h1v1h-1zM4 10h1v1h-1zM6 10h1v1h-1zM8 10h1v1h-1zM10 10h1v1h-1zM12 10h1v1h-1zM3 11h1v1h-1zM5 11h1v1h-1zM7 11h1v1h-1zM9 11h1v1h-1zM11 11h1v1h-1zM13 11h1v1h-1z"/><path fill="#FFFF00" d="M3 1h1v1h-1zM5 1h1v1h-1zM2 3h1v1h-1zM4 3h1v1h-1zM6 3h1v1h-1zM8 3h1v1h-1zM10 3h1v1h-1zM12 3h1v1h-1zM3 4h1v1h-1zM5 4h1v1h-1zM7 4h1v1h-1zM9 4h1v1h-1zM11 4h1v1h-1zM13 4h1v1h-1zM2 5h1v1h-1zM4 5h1v1h-1zM6 5h1v1h-1zM8 5h1v1h-1zM10 5h1v1h-1zM12 5h1v1h-1zM3 6h1v1h-1zM5 6h1v1h-1zM7 6h1v1h-1zM9 6h1v1h-1zM11 6h1v1h-1zM13 6h1v1h-1zM2 7h1v1h-1zM4 7h1v1h-1zM6 7h1v1h-1zM8 7h1v1h-1zM10 7h1v1h-1zM12 7h1v1h-1zM3 8h1v1h-1zM5 8h1v1h-1zM7 8h1v1h-1zM9 8h1v1h-1zM11 8h1v1h-1zM13 8h1v1h-1zM2 9h1v1h-1zM4 9h1v1h-1zM6 9h1v1h-1zM8 9h1v1h-1zM10 9h1v1h-1zM12 9h1v1h-1zM3 10h1v1h-1zM5 10h1v1h-1zM7 10h1v1h-1zM9 10h1v1h-1zM11 10h1v1h-1zM13 10h1v1h-1zM2 11h1v1h-1zM4 11h1v1h-1zM6 11h1v1h-1zM8 11h1v1h-1zM10 11h1v1h-1zM12 11h1v1h-1z"/><path fill="#FFFFFF" d="M1 2h7v1h-7zM1 3h1v1h-1zM1 4h1v1h-1zM1 5h1v1h-1zM1 6h1v1h-1zM1 7h1v1h-1zM1 8h1v1h-1zM1 9h1v1h-1zM1 10h1v1h-1zM1 11h1v1h-1z"/><path fill="#000000" d="M14 3h1v1h-1zM14 4h1v1h-1zM14 5h1v1h-1zM14 6h1v1h-1zM14 7h1v1h-1zM14 8h1v1h-1zM14 9h1v1h-1zM14 10h1v1h-1zM14 11h1v1h-1zM1 12h14v1h-14z"/></svg>
<div class="t" style="left:195px;top:338px;transform:scaleX(0.9715);">CN=Servers</div>
<div class="hl" style="left:188px;top:360px;width:5px"></div>
<div class="vl" style="left:182px;top:352px;height:4px"></div>
<div class="bx" style="left:178px;top:356px"><i></i></div>
<svg class="a" style="left:193px;top:352px" width="15" height="13" viewBox="0 0 15 13" shape-rendering="crispEdges"><path fill="#848284" d="M2 0h5v1h-5zM1 1h1v1h-1zM7 1h1v1h-1zM0 2h1v1h-1zM8 2h6v1h-6zM0 3h1v1h-1zM0 4h1v1h-1zM0 5h1v1h-1zM0 6h1v1h-1zM0 7h1v1h-1zM0 8h1v1h-1zM0 9h1v1h-1zM0 10h1v1h-1zM0 11h1v1h-1z"/><path fill="#CCCCAC" d="M2 1h1v1h-1zM4 1h1v1h-1zM6 1h1v1h-1zM3 3h1v1h-1zM5 3h1v1h-1zM7 3h1v1h-1zM9 3h1v1h-1zM11 3h1v1h-1zM13 3h1v1h-1zM2 4h1v1h-1zM4 4h1v1h-1zM6 4h1v1h-1zM8 4h1v1h-1zM10 4h1v1h-1zM12 4h1v1h-1zM3 5h1v1h-1zM5 5h1v1h-1zM7 5h1v1h-1zM9 5h1v1h-1zM11 5h1v1h-1zM13 5h1v1h-1zM2 6h1v1h-1zM4 6h1v1h-1zM6 6h1v1h-1zM8 6h1v1h-1zM10 6h1v1h-1zM12 6h1v1h-1zM3 7h1v1h-1zM5 7h1v1h-1zM7 7h1v1h-1zM9 7h1v1h-1zM11 7h1v1h-1zM13 7h1v1h-1zM2 8h1v1h-1zM4 8h1v1h-1zM6 8h1v1h-1zM8 8h1v1h-1zM10 8h1v1h-1zM12 8h1v1h-1zM3 9h1v1h-1zM5 9h1v1h-1zM7 9h1v1h-1zM9 9h1v1h-1zM11 9h1v1h-1zM13 9h1v1h-1zM2 10h1v1h-1zM4 10h1v1h-1zM6 10h1v1h-1zM8 10h1v1h-1zM10 10h1v1h-1zM12 10h1v1h-1zM3 11h1v1h-1zM5 11h1v1h-1zM7 11h1v1h-1zM9 11h1v1h-1zM11 11h1v1h-1zM13 11h1v1h-1z"/><path fill="#FFFF00" d="M3 1h1v1h-1zM5 1h1v1h-1zM2 3h1v1h-1zM4 3h1v1h-1zM6 3h1v1h-1zM8 3h1v1h-1zM10 3h1v1h-1zM12 3h1v1h-1zM3 4h1v1h-1zM5 4h1v1h-1zM7 4h1v1h-1zM9 4h1v1h-1zM11 4h1v1h-1zM13 4h1v1h-1zM2 5h1v1h-1zM4 5h1v1h-1zM6 5h1v1h-1zM8 5h1v1h-1zM10 5h1v1h-1zM12 5h1v1h-1zM3 6h1v1h-1zM5 6h1v1h-1zM7 6h1v1h-1zM9 6h1v1h-1zM11 6h1v1h-1zM13 6h1v1h-1zM2 7h1v1h-1zM4 7h1v1h-1zM6 7h1v1h-1zM8 7h1v1h-1zM10 7h1v1h-1zM12 7h1v1h-1zM3 8h1v1h-1zM5 8h1v1h-1zM7 8h1v1h-1zM9 8h1v1h-1zM11 8h1v1h-1zM13 8h1v1h-1zM2 9h1v1h-1zM4 9h1v1h-1zM6 9h1v1h-1zM8 9h1v1h-1zM10 9h1v1h-1zM12 9h1v1h-1zM3 10h1v1h-1zM5 10h1v1h-1zM7 10h1v1h-1zM9 10h1v1h-1zM11 10h1v1h-1zM13 10h1v1h-1zM2 11h1v1h-1zM4 11h1v1h-1zM6 11h1v1h-1zM8 11h1v1h-1zM10 11h1v1h-1zM12 11h1v1h-1z"/><path fill="#FFFFFF" d="M1 2h7v1h-7zM1 3h1v1h-1zM1 4h1v1h-1zM1 5h1v1h-1zM1 6h1v1h-1zM1 7h1v1h-1zM1 8h1v1h-1zM1 9h1v1h-1zM1 10h1v1h-1zM1 11h1v1h-1z"/><path fill="#000000" d="M14 3h1v1h-1zM14 4h1v1h-1zM14 5h1v1h-1zM14 6h1v1h-1zM14 7h1v1h-1zM14 8h1v1h-1zM14 9h1v1h-1zM14 10h1v1h-1zM14 11h1v1h-1zM1 12h14v1h-14z"/></svg>
<div class="t" style="left:214px;top:354px;transform:scaleX(0.8921);">CN=SOURCENETPRIME</div>
<div class="hl" style="left:206px;top:376px;width:6px"></div>
<div class="vl" style="left:201px;top:367px;height:5px"></div>
<div class="bx" style="left:197px;top:372px"><i></i><b></b></div>
<svg class="a" style="left:212px;top:368px" width="15" height="13" viewBox="0 0 15 13" shape-rendering="crispEdges"><path fill="#848284" d="M2 0h5v1h-5zM1 1h1v1h-1zM7 1h1v1h-1zM0 2h1v1h-1zM8 2h6v1h-6zM0 3h1v1h-1zM0 4h1v1h-1zM0 5h1v1h-1zM0 6h1v1h-1zM0 7h1v1h-1zM0 8h1v1h-1zM0 9h1v1h-1zM0 10h1v1h-1zM0 11h1v1h-1z"/><path fill="#CCCCAC" d="M2 1h1v1h-1zM4 1h1v1h-1zM6 1h1v1h-1zM3 3h1v1h-1zM5 3h1v1h-1zM7 3h1v1h-1zM9 3h1v1h-1zM11 3h1v1h-1zM13 3h1v1h-1zM2 4h1v1h-1zM4 4h1v1h-1zM6 4h1v1h-1zM8 4h1v1h-1zM10 4h1v1h-1zM12 4h1v1h-1zM3 5h1v1h-1zM5 5h1v1h-1zM7 5h1v1h-1zM9 5h1v1h-1zM11 5h1v1h-1zM13 5h1v1h-1zM2 6h1v1h-1zM4 6h1v1h-1zM6 6h1v1h-1zM8 6h1v1h-1zM10 6h1v1h-1zM12 6h1v1h-1zM3 7h1v1h-1zM5 7h1v1h-1zM7 7h1v1h-1zM9 7h1v1h-1zM11 7h1v1h-1zM13 7h1v1h-1zM2 8h1v1h-1zM4 8h1v1h-1zM6 8h1v1h-1zM8 8h1v1h-1zM10 8h1v1h-1zM12 8h1v1h-1zM3 9h1v1h-1zM5 9h1v1h-1zM7 9h1v1h-1zM9 9h1v1h-1zM11 9h1v1h-1zM13 9h1v1h-1zM2 10h1v1h-1zM4 10h1v1h-1zM6 10h1v1h-1zM8 10h1v1h-1zM10 10h1v1h-1zM12 10h1v1h-1zM3 11h1v1h-1zM5 11h1v1h-1zM7 11h1v1h-1zM9 11h1v1h-1zM11 11h1v1h-1zM13 11h1v1h-1z"/><path fill="#FFFF00" d="M3 1h1v1h-1zM5 1h1v1h-1zM2 3h1v1h-1zM4 3h1v1h-1zM6 3h1v1h-1zM8 3h1v1h-1zM10 3h1v1h-1zM12 3h1v1h-1zM3 4h1v1h-1zM5 4h1v1h-1zM7 4h1v1h-1zM9 4h1v1h-1zM11 4h1v1h-1zM13 4h1v1h-1zM2 5h1v1h-1zM4 5h1v1h-1zM6 5h1v1h-1zM8 5h1v1h-1zM10 5h1v1h-1zM12 5h1v1h-1zM3 6h1v1h-1zM5 6h1v1h-1zM7 6h1v1h-1zM9 6h1v1h-1zM11 6h1v1h-1zM13 6h1v1h-1zM2 7h1v1h-1zM4 7h1v1h-1zM6 7h1v1h-1zM8 7h1v1h-1zM10 7h1v1h-1zM12 7h1v1h-1zM3 8h1v1h-1zM5 8h1v1h-1zM7 8h1v1h-1zM9 8h1v1h-1zM11 8h1v1h-1zM13 8h1v1h-1zM2 9h1v1h-1zM4 9h1v1h-1zM6 9h1v1h-1zM8 9h1v1h-1zM10 9h1v1h-1zM12 9h1v1h-1zM3 10h1v1h-1zM5 10h1v1h-1zM7 10h1v1h-1zM9 10h1v1h-1zM11 10h1v1h-1zM13 10h1v1h-1zM2 11h1v1h-1zM4 11h1v1h-1zM6 11h1v1h-1zM8 11h1v1h-1zM10 11h1v1h-1zM12 11h1v1h-1z"/><path fill="#FFFFFF" d="M1 2h7v1h-7zM1 3h1v1h-1zM1 4h1v1h-1zM1 5h1v1h-1zM1 6h1v1h-1zM1 7h1v1h-1zM1 8h1v1h-1zM1 9h1v1h-1zM1 10h1v1h-1zM1 11h1v1h-1z"/><path fill="#000000" d="M14 3h1v1h-1zM14 4h1v1h-1zM14 5h1v1h-1zM14 6h1v1h-1zM14 7h1v1h-1zM14 8h1v1h-1zM14 9h1v1h-1zM14 10h1v1h-1zM14 11h1v1h-1zM1 12h14v1h-14z"/></svg>
<div class="t" style="left:233px;top:370px;transform:scaleX(0.9929);">CN=InformationStore</div>
<div class="hl" style="left:206px;top:392px;width:6px"></div>
<div class="vl" style="left:201px;top:381px;height:7px"></div>
<div class="bx" style="left:197px;top:388px"><i></i><b></b></div>
<svg class="a" style="left:212px;top:384px" width="15" height="13" viewBox="0 0 15 13" shape-rendering="crispEdges"><path fill="#848284" d="M2 0h5v1h-5zM1 1h1v1h-1zM7 1h1v1h-1zM0 2h1v1h-1zM8 2h6v1h-6zM0 3h1v1h-1zM0 4h1v1h-1zM0 5h1v1h-1zM0 6h1v1h-1zM0 7h1v1h-1zM0 8h1v1h-1zM0 9h1v1h-1zM0 10h1v1h-1zM0 11h1v1h-1z"/><path fill="#CCCCAC" d="M2 1h1v1h-1zM4 1h1v1h-1zM6 1h1v1h-1zM3 3h1v1h-1zM5 3h1v1h-1zM7 3h1v1h-1zM9 3h1v1h-1zM11 3h1v1h-1zM13 3h1v1h-1zM2 4h1v1h-1zM4 4h1v1h-1zM6 4h1v1h-1zM8 4h1v1h-1zM10 4h1v1h-1zM12 4h1v1h-1zM3 5h1v1h-1zM5 5h1v1h-1zM7 5h1v1h-1zM9 5h1v1h-1zM11 5h1v1h-1zM13 5h1v1h-1zM2 6h1v1h-1zM4 6h1v1h-1zM6 6h1v1h-1zM8 6h1v1h-1zM10 6h1v1h-1zM12 6h1v1h-1zM3 7h1v1h-1zM5 7h1v1h-1zM7 7h1v1h-1zM9 7h1v1h-1zM11 7h1v1h-1zM13 7h1v1h-1zM2 8h1v1h-1zM4 8h1v1h-1zM6 8h1v1h-1zM8 8h1v1h-1zM10 8h1v1h-1zM12 8h1v1h-1zM3 9h1v1h-1zM5 9h1v1h-1zM7 9h1v1h-1zM9 9h1v1h-1zM11 9h1v1h-1zM13 9h1v1h-1zM2 10h1v1h-1zM4 10h1v1h-1zM6 10h1v1h-1zM8 10h1v1h-1zM10 10h1v1h-1zM12 10h1v1h-1zM3 11h1v1h-1zM5 11h1v1h-1zM7 11h1v1h-1zM9 11h1v1h-1zM11 11h1v1h-1zM13 11h1v1h-1z"/><path fill="#FFFF00" d="M3 1h1v1h-1zM5 1h1v1h-1zM2 3h1v1h-1zM4 3h1v1h-1zM6 3h1v1h-1zM8 3h1v1h-1zM10 3h1v1h-1zM12 3h1v1h-1zM3 4h1v1h-1zM5 4h1v1h-1zM7 4h1v1h-1zM9 4h1v1h-1zM11 4h1v1h-1zM13 4h1v1h-1zM2 5h1v1h-1zM4 5h1v1h-1zM6 5h1v1h-1zM8 5h1v1h-1zM10 5h1v1h-1zM12 5h1v1h-1zM3 6h1v1h-1zM5 6h1v1h-1zM7 6h1v1h-1zM9 6h1v1h-1zM11 6h1v1h-1zM13 6h1v1h-1zM2 7h1v1h-1zM4 7h1v1h-1zM6 7h1v1h-1zM8 7h1v1h-1zM10 7h1v1h-1zM12 7h1v1h-1zM3 8h1v1h-1zM5 8h1v1h-1zM7 8h1v1h-1zM9 8h1v1h-1zM11 8h1v1h-1zM13 8h1v1h-1zM2 9h1v1h-1zM4 9h1v1h-1zM6 9h1v1h-1zM8 9h1v1h-1zM10 9h1v1h-1zM12 9h1v1h-1zM3 10h1v1h-1zM5 10h1v1h-1zM7 10h1v1h-1zM9 10h1v1h-1zM11 10h1v1h-1zM13 10h1v1h-1zM2 11h1v1h-1zM4 11h1v1h-1zM6 11h1v1h-1zM8 11h1v1h-1zM10 11h1v1h-1zM12 11h1v1h-1z"/><path fill="#FFFFFF" d="M1 2h7v1h-7zM1 3h1v1h-1zM1 4h1v1h-1zM1 5h1v1h-1zM1 6h1v1h-1zM1 7h1v1h-1zM1 8h1v1h-1zM1 9h1v1h-1zM1 10h1v1h-1zM1 11h1v1h-1z"/><path fill="#000000" d="M14 3h1v1h-1zM14 4h1v1h-1zM14 5h1v1h-1zM14 6h1v1h-1zM14 7h1v1h-1zM14 8h1v1h-1zM14 9h1v1h-1zM14 10h1v1h-1zM14 11h1v1h-1zM1 12h14v1h-14z"/></svg>
<div class="t" style="left:233px;top:386px;transform:scaleX(0.9655);">CN=Microsoft MTA</div>
<div class="hl" style="left:206px;top:408px;width:6px"></div>
<div class="vl" style="left:201px;top:397px;height:7px"></div>
<div class="bx" style="left:197px;top:404px"><i></i><b></b></div>
<svg class="a" style="left:212px;top:400px" width="15" height="13" viewBox="0 0 15 13" shape-rendering="crispEdges"><path fill="#848284" d="M2 0h5v1h-5zM1 1h1v1h-1zM7 1h1v1h-1zM0 2h1v1h-1zM8 2h6v1h-6zM0 3h1v1h-1zM0 4h1v1h-1zM0 5h1v1h-1zM0 6h1v1h-1zM0 7h1v1h-1zM0 8h1v1h-1zM0 9h1v1h-1zM0 10h1v1h-1zM0 11h1v1h-1z"/><path fill="#CCCCAC" d="M2 1h1v1h-1zM4 1h1v1h-1zM6 1h1v1h-1zM3 3h1v1h-1zM5 3h1v1h-1zM7 3h1v1h-1zM9 3h1v1h-1zM11 3h1v1h-1zM13 3h1v1h-1zM2 4h1v1h-1zM4 4h1v1h-1zM6 4h1v1h-1zM8 4h1v1h-1zM10 4h1v1h-1zM12 4h1v1h-1zM3 5h1v1h-1zM5 5h1v1h-1zM7 5h1v1h-1zM9 5h1v1h-1zM11 5h1v1h-1zM13 5h1v1h-1zM2 6h1v1h-1zM4 6h1v1h-1zM6 6h1v1h-1zM8 6h1v1h-1zM10 6h1v1h-1zM12 6h1v1h-1zM3 7h1v1h-1zM5 7h1v1h-1zM7 7h1v1h-1zM9 7h1v1h-1zM11 7h1v1h-1zM13 7h1v1h-1zM2 8h1v1h-1zM4 8h1v1h-1zM6 8h1v1h-1zM8 8h1v1h-1zM10 8h1v1h-1zM12 8h1v1h-1zM3 9h1v1h-1zM5 9h1v1h-1zM7 9h1v1h-1zM9 9h1v1h-1zM11 9h1v1h-1zM13 9h1v1h-1zM2 10h1v1h-1zM4 10h1v1h-1zM6 10h1v1h-1zM8 10h1v1h-1zM10 10h1v1h-1zM12 10h1v1h-1zM3 11h1v1h-1zM5 11h1v1h-1zM7 11h1v1h-1zM9 11h1v1h-1zM11 11h1v1h-1zM13 11h1v1h-1z"/><path fill="#FFFF00" d="M3 1h1v1h-1zM5 1h1v1h-1zM2 3h1v1h-1zM4 3h1v1h-1zM6 3h1v1h-1zM8 3h1v1h-1zM10 3h1v1h-1zM12 3h1v1h-1zM3 4h1v1h-1zM5 4h1v1h-1zM7 4h1v1h-1zM9 4h1v1h-1zM11 4h1v1h-1zM13 4h1v1h-1zM2 5h1v1h-1zM4 5h1v1h-1zM6 5h1v1h-1zM8 5h1v1h-1zM10 5h1v1h-1zM12 5h1v1h-1zM3 6h1v1h-1zM5 6h1v1h-1zM7 6h1v1h-1zM9 6h1v1h-1zM11 6h1v1h-1zM13 6h1v1h-1zM2 7h1v1h-1zM4 7h1v1h-1zM6 7h1v1h-1zM8 7h1v1h-1zM10 7h1v1h-1zM12 7h1v1h-1zM3 8h1v1h-1zM5 8h1v1h-1zM7 8h1v1h-1zM9 8h1v1h-1zM11 8h1v1h-1zM13 8h1v1h-1zM2 9h1v1h-1zM4 9h1v1h-1zM6 9h1v1h-1zM8 9h1v1h-1zM10 9h1v1h-1zM12 9h1v1h-1zM3 10h1v1h-1zM5 10h1v1h-1zM7 10h1v1h-1zM9 10h1v1h-1zM11 10h1v1h-1zM13 10h1v1h-1zM2 11h1v1h-1zM4 11h1v1h-1zM6 11h1v1h-1zM8 11h1v1h-1zM10 11h1v1h-1zM12 11h1v1h-1z"/><path fill="#FFFFFF" d="M1 2h7v1h-7zM1 3h1v1h-1zM1 4h1v1h-1zM1 5h1v1h-1zM1 6h1v1h-1zM1 7h1v1h-1zM1 8h1v1h-1zM1 9h1v1h-1zM1 10h1v1h-1zM1 11h1v1h-1z"/><path fill="#000000" d="M14 3h1v1h-1zM14 4h1v1h-1zM14 5h1v1h-1zM14 6h1v1h-1zM14 7h1v1h-1zM14 8h1v1h-1zM14 9h1v1h-1zM14 10h1v1h-1zM14 11h1v1h-1zM1 12h14v1h-14z"/></svg>
<div class="t" style="left:233px;top:402px;transform:scaleX(0.9942);">CN=Microsoft System Attendant</div>
<div class="hl" style="left:206px;top:424px;width:6px"></div>
<div class="vl" style="left:201px;top:413px;height:7px"></div>
<div class="bx" style="left:197px;top:420px"><i></i></div>
<svg class="a" style="left:212px;top:416px" width="15" height="13" viewBox="0 0 15 13" shape-rendering="crispEdges"><path fill="#848284" d="M2 0h5v1h-5zM1 1h1v1h-1zM7 1h1v1h-1zM0 2h1v1h-1zM8 2h6v1h-6zM0 3h1v1h-1zM0 4h1v1h-1zM0 5h1v1h-1zM0 6h1v1h-1zM0 7h1v1h-1zM0 8h1v1h-1zM0 9h1v1h-1zM0 10h1v1h-1zM0 11h1v1h-1z"/><path fill="#CCCCAC" d="M2 1h1v1h-1zM4 1h1v1h-1zM6 1h1v1h-1zM3 3h1v1h-1zM5 3h1v1h-1zM7 3h1v1h-1zM9 3h1v1h-1zM11 3h1v1h-1zM13 3h1v1h-1zM2 4h1v1h-1zM4 4h1v1h-1zM6 4h1v1h-1zM8 4h1v1h-1zM10 4h1v1h-1zM12 4h1v1h-1zM3 5h1v1h-1zM5 5h1v1h-1zM7 5h1v1h-1zM9 5h1v1h-1zM11 5h1v1h-1zM13 5h1v1h-1zM2 6h1v1h-1zM4 6h1v1h-1zM6 6h1v1h-1zM8 6h1v1h-1zM10 6h1v1h-1zM12 6h1v1h-1zM3 7h1v1h-1zM5 7h1v1h-1zM7 7h1v1h-1zM9 7h1v1h-1zM11 7h1v1h-1zM13 7h1v1h-1zM2 8h1v1h-1zM4 8h1v1h-1zM6 8h1v1h-1zM8 8h1v1h-1zM10 8h1v1h-1zM12 8h1v1h-1zM3 9h1v1h-1zM5 9h1v1h-1zM7 9h1v1h-1zM9 9h1v1h-1zM11 9h1v1h-1zM13 9h1v1h-1zM2 10h1v1h-1zM4 10h1v1h-1zM6 10h1v1h-1zM8 10h1v1h-1zM10 10h1v1h-1zM12 10h1v1h-1zM3 11h1v1h-1zM5 11h1v1h-1zM7 11h1v1h-1zM9 11h1v1h-1zM11 11h1v1h-1zM13 11h1v1h-1z"/><path fill="#FFFF00" d="M3 1h1v1h-1zM5 1h1v1h-1zM2 3h1v1h-1zM4 3h1v1h-1zM6 3h1v1h-1zM8 3h1v1h-1zM10 3h1v1h-1zM12 3h1v1h-1zM3 4h1v1h-1zM5 4h1v1h-1zM7 4h1v1h-1zM9 4h1v1h-1zM11 4h1v1h-1zM13 4h1v1h-1zM2 5h1v1h-1zM4 5h1v1h-1zM6 5h1v1h-1zM8 5h1v1h-1zM10 5h1v1h-1zM12 5h1v1h-1zM3 6h1v1h-1zM5 6h1v1h-1zM7 6h1v1h-1zM9 6h1v1h-1zM11 6h1v1h-1zM13 6h1v1h-1zM2 7h1v1h-1zM4 7h1v1h-1zM6 7h1v1h-1zM8 7h1v1h-1zM10 7h1v1h-1zM12 7h1v1h-1zM3 8h1v1h-1zM5 8h1v1h-1zM7 8h1v1h-1zM9 8h1v1h-1zM11 8h1v1h-1zM13 8h1v1h-1zM2 9h1v1h-1zM4 9h1v1h-1zM6 9h1v1h-1zM8 9h1v1h-1zM10 9h1v1h-1zM12 9h1v1h-1zM3 10h1v1h-1zM5 10h1v1h-1zM7 10h1v1h-1zM9 10h1v1h-1zM11 10h1v1h-1zM13 10h1v1h-1zM2 11h1v1h-1zM4 11h1v1h-1zM6 11h1v1h-1zM8 11h1v1h-1zM10 11h1v1h-1zM12 11h1v1h-1z"/><path fill="#FFFFFF" d="M1 2h7v1h-7zM1 3h1v1h-1zM1 4h1v1h-1zM1 5h1v1h-1zM1 6h1v1h-1zM1 7h1v1h-1zM1 8h1v1h-1zM1 9h1v1h-1zM1 10h1v1h-1zM1 11h1v1h-1z"/><path fill="#000000" d="M14 3h1v1h-1zM14 4h1v1h-1zM14 5h1v1h-1zM14 6h1v1h-1zM14 7h1v1h-1zM14 8h1v1h-1zM14 9h1v1h-1zM14 10h1v1h-1zM14 11h1v1h-1zM1 12h14v1h-14z"/></svg>
<div class="t" style="left:233px;top:418px;transform:scaleX(0.9564);">CN=Protocols</div>
<div class="hl" style="left:226px;top:440px;width:5px"></div>
<div class="vl" style="left:220px;top:432px;height:4px"></div>
<div class="bx" style="left:216px;top:436px"><i></i></div>
<svg class="a" style="left:231px;top:432px" width="15" height="13" viewBox="0 0 15 13" shape-rendering="crispEdges"><path fill="#848284" d="M2 0h5v1h-5zM1 1h1v1h-1zM7 1h1v1h-1zM0 2h1v1h-1zM8 2h6v1h-6zM0 3h1v1h-1zM0 4h1v1h-1zM0 5h1v1h-1zM0 6h1v1h-1zM0 7h1v1h-1zM0 8h1v1h-1zM0 9h1v1h-1zM0 10h1v1h-1zM0 11h1v1h-1z"/><path fill="#CCCCAC" d="M2 1h1v1h-1zM4 1h1v1h-1zM6 1h1v1h-1zM3 3h1v1h-1zM5 3h1v1h-1zM7 3h1v1h-1zM9 3h1v1h-1zM11 3h1v1h-1zM13 3h1v1h-1zM2 4h1v1h-1zM4 4h1v1h-1zM6 4h1v1h-1zM8 4h1v1h-1zM10 4h1v1h-1zM12 4h1v1h-1zM3 5h1v1h-1zM5 5h1v1h-1zM7 5h1v1h-1zM9 5h1v1h-1zM11 5h1v1h-1zM13 5h1v1h-1zM2 6h1v1h-1zM4 6h1v1h-1zM6 6h1v1h-1zM8 6h1v1h-1zM10 6h1v1h-1zM12 6h1v1h-1zM3 7h1v1h-1zM5 7h1v1h-1zM7 7h1v1h-1zM9 7h1v1h-1zM11 7h1v1h-1zM13 7h1v1h-1zM2 8h1v1h-1zM4 8h1v1h-1zM6 8h1v1h-1zM8 8h1v1h-1zM10 8h1v1h-1zM12 8h1v1h-1zM3 9h1v1h-1zM5 9h1v1h-1zM7 9h1v1h-1zM9 9h1v1h-1zM11 9h1v1h-1zM13 9h1v1h-1zM2 10h1v1h-1zM4 10h1v1h-1zM6 10h1v1h-1zM8 10h1v1h-1zM10 10h1v1h-1zM12 10h1v1h-1zM3 11h1v1h-1zM5 11h1v1h-1zM7 11h1v1h-1zM9 11h1v1h-1zM11 11h1v1h-1zM13 11h1v1h-1z"/><path fill="#FFFF00" d="M3 1h1v1h-1zM5 1h1v1h-1zM2 3h1v1h-1zM4 3h1v1h-1zM6 3h1v1h-1zM8 3h1v1h-1zM10 3h1v1h-1zM12 3h1v1h-1zM3 4h1v1h-1zM5 4h1v1h-1zM7 4h1v1h-1zM9 4h1v1h-1zM11 4h1v1h-1zM13 4h1v1h-1zM2 5h1v1h-1zM4 5h1v1h-1zM6 5h1v1h-1zM8 5h1v1h-1zM10 5h1v1h-1zM12 5h1v1h-1zM3 6h1v1h-1zM5 6h1v1h-1zM7 6h1v1h-1zM9 6h1v1h-1zM11 6h1v1h-1zM13 6h1v1h-1zM2 7h1v1h-1zM4 7h1v1h-1zM6 7h1v1h-1zM8 7h1v1h-1zM10 7h1v1h-1zM12 7h1v1h-1zM3 8h1v1h-1zM5 8h1v1h-1zM7 8h1v1h-1zM9 8h1v1h-1zM11 8h1v1h-1zM13 8h1v1h-1zM2 9h1v1h-1zM4 9h1v1h-1zM6 9h1v1h-1zM8 9h1v1h-1zM10 9h1v1h-1zM12 9h1v1h-1zM3 10h1v1h-1zM5 10h1v1h-1zM7 10h1v1h-1zM9 10h1v1h-1zM11 10h1v1h-1zM13 10h1v1h-1zM2 11h1v1h-1zM4 11h1v1h-1zM6 11h1v1h-1zM8 11h1v1h-1zM10 11h1v1h-1zM12 11h1v1h-1z"/><path fill="#FFFFFF" d="M1 2h7v1h-7zM1 3h1v1h-1zM1 4h1v1h-1zM1 5h1v1h-1zM1 6h1v1h-1zM1 7h1v1h-1zM1 8h1v1h-1zM1 9h1v1h-1zM1 10h1v1h-1zM1 11h1v1h-1z"/><path fill="#000000" d="M14 3h1v1h-1zM14 4h1v1h-1zM14 5h1v1h-1zM14 6h1v1h-1zM14 7h1v1h-1zM14 8h1v1h-1zM14 9h1v1h-1zM14 10h1v1h-1zM14 11h1v1h-1zM1 12h14v1h-14z"/></svg>
<div class="t" style="left:252px;top:434px;transform:scaleX(0.9053);">CN=HTTP</div>
<div class="hl" style="left:244px;top:456px;width:6px"></div>
<div class="vl" style="left:239px;top:447px;height:5px"></div>
<div class="bx" style="left:235px;top:452px"><i></i></div>
<svg class="a" style="left:250px;top:448px" width="15" height="13" viewBox="0 0 15 13" shape-rendering="crispEdges"><path fill="#848284" d="M2 0h5v1h-5zM1 1h1v1h-1zM7 1h1v1h-1zM0 2h1v1h-1zM8 2h6v1h-6zM0 3h1v1h-1zM0 4h1v1h-1zM0 5h1v1h-1zM0 6h1v1h-1zM0 7h1v1h-1zM0 8h1v1h-1zM0 9h1v1h-1zM0 10h1v1h-1zM0 11h1v1h-1z"/><path fill="#CCCCAC" d="M2 1h1v1h-1zM4 1h1v1h-1zM6 1h1v1h-1zM3 3h1v1h-1zM5 3h1v1h-1zM7 3h1v1h-1zM9 3h1v1h-1zM11 3h1v1h-1zM13 3h1v1h-1zM2 4h1v1h-1zM4 4h1v1h-1zM6 4h1v1h-1zM8 4h1v1h-1zM10 4h1v1h-1zM12 4h1v1h-1zM3 5h1v1h-1zM5 5h1v1h-1zM7 5h1v1h-1zM9 5h1v1h-1zM11 5h1v1h-1zM13 5h1v1h-1zM2 6h1v1h-1zM4 6h1v1h-1zM6 6h1v1h-1zM8 6h1v1h-1zM10 6h1v1h-1zM12 6h1v1h-1zM3 7h1v1h-1zM5 7h1v1h-1zM7 7h1v1h-1zM9 7h1v1h-1zM11 7h1v1h-1zM13 7h1v1h-1zM2 8h1v1h-1zM4 8h1v1h-1zM6 8h1v1h-1zM8 8h1v1h-1zM10 8h1v1h-1zM12 8h1v1h-1zM3 9h1v1h-1zM5 9h1v1h-1zM7 9h1v1h-1zM9 9h1v1h-1zM11 9h1v1h-1zM13 9h1v1h-1zM2 10h1v1h-1zM4 10h1v1h-1zM6 10h1v1h-1zM8 10h1v1h-1zM10 10h1v1h-1zM12 10h1v1h-1zM3 11h1v1h-1zM5 11h1v1h-1zM7 11h1v1h-1zM9 11h1v1h-1zM11 11h1v1h-1zM13 11h1v1h-1z"/><path fill="#FFFF00" d="M3 1h1v1h-1zM5 1h1v1h-1zM2 3h1v1h-1zM4 3h1v1h-1zM6 3h1v1h-1zM8 3h1v1h-1zM10 3h1v1h-1zM12 3h1v1h-1zM3 4h1v1h-1zM5 4h1v1h-1zM7 4h1v1h-1zM9 4h1v1h-1zM11 4h1v1h-1zM13 4h1v1h-1zM2 5h1v1h-1zM4 5h1v1h-1zM6 5h1v1h-1zM8 5h1v1h-1zM10 5h1v1h-1zM12 5h1v1h-1zM3 6h1v1h-1zM5 6h1v1h-1zM7 6h1v1h-1zM9 6h1v1h-1zM11 6h1v1h-1zM13 6h1v1h-1zM2 7h1v1h-1zM4 7h1v1h-1zM6 7h1v1h-1zM8 7h1v1h-1zM10 7h1v1h-1zM12 7h1v1h-1zM3 8h1v1h-1zM5 8h1v1h-1zM7 8h1v1h-1zM9 8h1v1h-1zM11 8h1v1h-1zM13 8h1v1h-1zM2 9h1v1h-1zM4 9h1v1h-1zM6 9h1v1h-1zM8 9h1v1h-1zM10 9h1v1h-1zM12 9h1v1h-1zM3 10h1v1h-1zM5 10h1v1h-1zM7 10h1v1h-1zM9 10h1v1h-1zM11 10h1v1h-1zM13 10h1v1h-1zM2 11h1v1h-1zM4 11h1v1h-1zM6 11h1v1h-1zM8 11h1v1h-1zM10 11h1v1h-1zM12 11h1v1h-1z"/><path fill="#FFFFFF" d="M1 2h7v1h-7zM1 3h1v1h-1zM1 4h1v1h-1zM1 5h1v1h-1zM1 6h1v1h-1zM1 7h1v1h-1zM1 8h1v1h-1zM1 9h1v1h-1zM1 10h1v1h-1zM1 11h1v1h-1z"/><path fill="#000000" d="M14 3h1v1h-1zM14 4h1v1h-1zM14 5h1v1h-1zM14 6h1v1h-1zM14 7h1v1h-1zM14 8h1v1h-1zM14 9h1v1h-1zM14 10h1v1h-1zM14 11h1v1h-1zM1 12h14v1h-14z"/></svg>
<div class="t" style="left:271px;top:450px;transform:scaleX(0.9213);">CN=1</div>
<div class="hl" style="left:264px;top:472px;width:5px"></div>
<div class="vl" style="left:258px;top:464px;height:4px"></div>
<div class="bx" style="left:254px;top:468px"><i></i><b></b></div>
<svg class="a" style="left:269px;top:464px" width="15" height="13" viewBox="0 0 15 13" shape-rendering="crispEdges"><path fill="#848284" d="M2 0h5v1h-5zM1 1h1v1h-1zM7 1h1v1h-1zM0 2h1v1h-1zM8 2h6v1h-6zM0 3h1v1h-1zM0 4h1v1h-1zM0 5h1v1h-1zM0 6h1v1h-1zM0 7h1v1h-1zM0 8h1v1h-1zM0 9h1v1h-1zM0 10h1v1h-1zM0 11h1v1h-1z"/><path fill="#CCCCAC" d="M2 1h1v1h-1zM4 1h1v1h-1zM6 1h1v1h-1zM3 3h1v1h-1zM5 3h1v1h-1zM7 3h1v1h-1zM9 3h1v1h-1zM11 3h1v1h-1zM13 3h1v1h-1zM2 4h1v1h-1zM4 4h1v1h-1zM6 4h1v1h-1zM8 4h1v1h-1zM10 4h1v1h-1zM12 4h1v1h-1zM3 5h1v1h-1zM5 5h1v1h-1zM7 5h1v1h-1zM9 5h1v1h-1zM11 5h1v1h-1zM13 5h1v1h-1zM2 6h1v1h-1zM4 6h1v1h-1zM6 6h1v1h-1zM8 6h1v1h-1zM10 6h1v1h-1zM12 6h1v1h-1zM3 7h1v1h-1zM5 7h1v1h-1zM7 7h1v1h-1zM9 7h1v1h-1zM11 7h1v1h-1zM13 7h1v1h-1zM2 8h1v1h-1zM4 8h1v1h-1zM6 8h1v1h-1zM8 8h1v1h-1zM10 8h1v1h-1zM12 8h1v1h-1zM3 9h1v1h-1zM5 9h1v1h-1zM7 9h1v1h-1zM9 9h1v1h-1zM11 9h1v1h-1zM13 9h1v1h-1zM2 10h1v1h-1zM4 10h1v1h-1zM6 10h1v1h-1zM8 10h1v1h-1zM10 10h1v1h-1zM12 10h1v1h-1zM3 11h1v1h-1zM5 11h1v1h-1zM7 11h1v1h-1zM9 11h1v1h-1zM11 11h1v1h-1zM13 11h1v1h-1z"/><path fill="#FFFF00" d="M3 1h1v1h-1zM5 1h1v1h-1zM2 3h1v1h-1zM4 3h1v1h-1zM6 3h1v1h-1zM8 3h1v1h-1zM10 3h1v1h-1zM12 3h1v1h-1zM3 4h1v1h-1zM5 4h1v1h-1zM7 4h1v1h-1zM9 4h1v1h-1zM11 4h1v1h-1zM13 4h1v1h-1zM2 5h1v1h-1zM4 5h1v1h-1zM6 5h1v1h-1zM8 5h1v1h-1zM10 5h1v1h-1zM12 5h1v1h-1zM3 6h1v1h-1zM5 6h1v1h-1zM7 6h1v1h-1zM9 6h1v1h-1zM11 6h1v1h-1zM13 6h1v1h-1zM2 7h1v1h-1zM4 7h1v1h-1zM6 7h1v1h-1zM8 7h1v1h-1zM10 7h1v1h-1zM12 7h1v1h-1zM3 8h1v1h-1zM5 8h1v1h-1zM7 8h1v1h-1zM9 8h1v1h-1zM11 8h1v1h-1zM13 8h1v1h-1zM2 9h1v1h-1zM4 9h1v1h-1zM6 9h1v1h-1zM8 9h1v1h-1zM10 9h1v1h-1zM12 9h1v1h-1zM3 10h1v1h-1zM5 10h1v1h-1zM7 10h1v1h-1zM9 10h1v1h-1zM11 10h1v1h-1zM13 10h1v1h-1zM2 11h1v1h-1zM4 11h1v1h-1zM6 11h1v1h-1zM8 11h1v1h-1zM10 11h1v1h-1zM12 11h1v1h-1z"/><path fill="#FFFFFF" d="M1 2h7v1h-7zM1 3h1v1h-1zM1 4h1v1h-1zM1 5h1v1h-1zM1 6h1v1h-1zM1 7h1v1h-1zM1 8h1v1h-1zM1 9h1v1h-1zM1 10h1v1h-1zM1 11h1v1h-1z"/><path fill="#000000" d="M14 3h1v1h-1zM14 4h1v1h-1zM14 5h1v1h-1zM14 6h1v1h-1zM14 7h1v1h-1zM14 8h1v1h-1zM14 9h1v1h-1zM14 10h1v1h-1zM14 11h1v1h-1zM1 12h14v1h-14z"/></svg>
<div class="t" style="left:290px;top:466px;transform:scaleX(0.9461);">CN=Exadmin</div>
<div class="hl" style="left:264px;top:488px;width:5px"></div>
<div class="vl" style="left:258px;top:478px;height:6px"></div>
<div class="bx" style="left:254px;top:484px"><i></i><b></b></div>
<svg class="a" style="left:269px;top:480px" width="15" height="13" viewBox="0 0 15 13" shape-rendering="crispEdges"><path fill="#848284" d="M2 0h5v1h-5zM1 1h1v1h-1zM7 1h1v1h-1zM0 2h1v1h-1zM8 2h6v1h-6zM0 3h1v1h-1zM0 4h1v1h-1zM0 5h1v1h-1zM0 6h1v1h-1zM0 7h1v1h-1zM0 8h1v1h-1zM0 9h1v1h-1zM0 10h1v1h-1zM0 11h1v1h-1z"/><path fill="#CCCCAC" d="M2 1h1v1h-1zM4 1h1v1h-1zM6 1h1v1h-1zM3 3h1v1h-1zM5 3h1v1h-1zM7 3h1v1h-1zM9 3h1v1h-1zM11 3h1v1h-1zM13 3h1v1h-1zM2 4h1v1h-1zM4 4h1v1h-1zM6 4h1v1h-1zM8 4h1v1h-1zM10 4h1v1h-1zM12 4h1v1h-1zM3 5h1v1h-1zM5 5h1v1h-1zM7 5h1v1h-1zM9 5h1v1h-1zM11 5h1v1h-1zM13 5h1v1h-1zM2 6h1v1h-1zM4 6h1v1h-1zM6 6h1v1h-1zM8 6h1v1h-1zM10 6h1v1h-1zM12 6h1v1h-1zM3 7h1v1h-1zM5 7h1v1h-1zM7 7h1v1h-1zM9 7h1v1h-1zM11 7h1v1h-1zM13 7h1v1h-1zM2 8h1v1h-1zM4 8h1v1h-1zM6 8h1v1h-1zM8 8h1v1h-1zM10 8h1v1h-1zM12 8h1v1h-1zM3 9h1v1h-1zM5 9h1v1h-1zM7 9h1v1h-1zM9 9h1v1h-1zM11 9h1v1h-1zM13 9h1v1h-1zM2 10h1v1h-1zM4 10h1v1h-1zM6 10h1v1h-1zM8 10h1v1h-1zM10 10h1v1h-1zM12 10h1v1h-1zM3 11h1v1h-1zM5 11h1v1h-1zM7 11h1v1h-1zM9 11h1v1h-1zM11 11h1v1h-1zM13 11h1v1h-1z"/><path fill="#FFFF00" d="M3 1h1v1h-1zM5 1h1v1h-1zM2 3h1v1h-1zM4 3h1v1h-1zM6 3h1v1h-1zM8 3h1v1h-1zM10 3h1v1h-1zM12 3h1v1h-1zM3 4h1v1h-1zM5 4h1v1h-1zM7 4h1v1h-1zM9 4h1v1h-1zM11 4h1v1h-1zM13 4h1v1h-1zM2 5h1v1h-1zM4 5h1v1h-1zM6 5h1v1h-1zM8 5h1v1h-1zM10 5h1v1h-1zM12 5h1v1h-1zM3 6h1v1h-1zM5 6h1v1h-1zM7 6h1v1h-1zM9 6h1v1h-1zM11 6h1v1h-1zM13 6h1v1h-1zM2 7h1v1h-1zM4 7h1v1h-1zM6 7h1v1h-1zM8 7h1v1h-1zM10 7h1v1h-1zM12 7h1v1h-1zM3 8h1v1h-1zM5 8h1v1h-1zM7 8h1v1h-1zM9 8h1v1h-1zM11 8h1v1h-1zM13 8h1v1h-1zM2 9h1v1h-1zM4 9h1v1h-1zM6 9h1v1h-1zM8 9h1v1h-1zM10 9h1v1h-1zM12 9h1v1h-1zM3 10h1v1h-1zM5 10h1v1h-1zM7 10h1v1h-1zM9 10h1v1h-1zM11 10h1v1h-1zM13 10h1v1h-1zM2 11h1v1h-1zM4 11h1v1h-1zM6 11h1v1h-1zM8 11h1v1h-1zM10 11h1v1h-1zM12 11h1v1h-1z"/><path fill="#FFFFFF" d="M1 2h7v1h-7zM1 3h1v1h-1zM1 4h1v1h-1zM1 5h1v1h-1zM1 6h1v1h-1zM1 7h1v1h-1zM1 8h1v1h-1zM1 9h1v1h-1zM1 10h1v1h-1zM1 11h1v1h-1z"/><path fill="#000000" d="M14 3h1v1h-1zM14 4h1v1h-1zM14 5h1v1h-1zM14 6h1v1h-1zM14 7h1v1h-1zM14 8h1v1h-1zM14 9h1v1h-1zM14 10h1v1h-1zM14 11h1v1h-1zM1 12h14v1h-14z"/></svg>
<div class="t" style="left:290px;top:482px;transform:scaleX(0.9586);">CN=Exchange</div>
<div class="hl" style="left:264px;top:504px;width:5px"></div>
<div class="vl" style="left:258px;top:494px;height:6px"></div>
<div class="bx" style="left:254px;top:500px"><i></i><b></b></div>
<svg class="a" style="left:269px;top:496px" width="15" height="13" viewBox="0 0 15 13" shape-rendering="crispEdges"><path fill="#848284" d="M2 0h5v1h-5zM1 1h1v1h-1zM7 1h1v1h-1zM0 2h1v1h-1zM8 2h6v1h-6zM0 3h1v1h-1zM0 4h1v1h-1zM0 5h1v1h-1zM0 6h1v1h-1zM0 7h1v1h-1zM0 8h1v1h-1zM0 9h1v1h-1zM0 10h1v1h-1zM0 11h1v1h-1z"/><path fill="#CCCCAC" d="M2 1h1v1h-1zM4 1h1v1h-1zM6 1h1v1h-1zM3 3h1v1h-1zM5 3h1v1h-1zM7 3h1v1h-1zM9 3h1v1h-1zM11 3h1v1h-1zM13 3h1v1h-1zM2 4h1v1h-1zM4 4h1v1h-1zM6 4h1v1h-1zM8 4h1v1h-1zM10 4h1v1h-1zM12 4h1v1h-1zM3 5h1v1h-1zM5 5h1v1h-1zM7 5h1v1h-1zM9 5h1v1h-1zM11 5h1v1h-1zM13 5h1v1h-1zM2 6h1v1h-1zM4 6h1v1h-1zM6 6h1v1h-1zM8 6h1v1h-1zM10 6h1v1h-1zM12 6h1v1h-1zM3 7h1v1h-1zM5 7h1v1h-1zM7 7h1v1h-1zM9 7h1v1h-1zM11 7h1v1h-1zM13 7h1v1h-1zM2 8h1v1h-1zM4 8h1v1h-1zM6 8h1v1h-1zM8 8h1v1h-1zM10 8h1v1h-1zM12 8h1v1h-1zM3 9h1v1h-1zM5 9h1v1h-1zM7 9h1v1h-1zM9 9h1v1h-1zM11 9h1v1h-1zM13 9h1v1h-1zM2 10h1v1h-1zM4 10h1v1h-1zM6 10h1v1h-1zM8 10h1v1h-1zM10 10h1v1h-1zM12 10h1v1h-1zM3 11h1v1h-1zM5 11h1v1h-1zM7 11h1v1h-1zM9 11h1v1h-1zM11 11h1v1h-1zM13 11h1v1h-1z"/><path fill="#FFFF00" d="M3 1h1v1h-1zM5 1h1v1h-1zM2 3h1v1h-1zM4 3h1v1h-1zM6 3h1v1h-1zM8 3h1v1h-1zM10 3h1v1h-1zM12 3h1v1h-1zM3 4h1v1h-1zM5 4h1v1h-1zM7 4h1v1h-1zM9 4h1v1h-1zM11 4h1v1h-1zM13 4h1v1h-1zM2 5h1v1h-1zM4 5h1v1h-1zM6 5h1v1h-1zM8 5h1v1h-1zM10 5h1v1h-1zM12 5h1v1h-1zM3 6h1v1h-1zM5 6h1v1h-1zM7 6h1v1h-1zM9 6h1v1h-1zM11 6h1v1h-1zM13 6h1v1h-1zM2 7h1v1h-1zM4 7h1v1h-1zM6 7h1v1h-1zM8 7h1v1h-1zM10 7h1v1h-1zM12 7h1v1h-1zM3 8h1v1h-1zM5 8h1v1h-1zM7 8h1v1h-1zM9 8h1v1h-1zM11 8h1v1h-1zM13 8h1v1h-1zM2 9h1v1h-1zM4 9h1v1h-1zM6 9h1v1h-1zM8 9h1v1h-1zM10 9h1v1h-1zM12 9h1v1h-1zM3 10h1v1h-1zM5 10h1v1h-1zM7 10h1v1h-1zM9 10h1v1h-1zM11 10h1v1h-1zM13 10h1v1h-1zM2 11h1v1h-1zM4 11h1v1h-1zM6 11h1v1h-1zM8 11h1v1h-1zM10 11h1v1h-1zM12 11h1v1h-1z"/><path fill="#FFFFFF" d="M1 2h7v1h-7zM1 3h1v1h-1zM1 4h1v1h-1zM1 5h1v1h-1zM1 6h1v1h-1zM1 7h1v1h-1zM1 8h1v1h-1zM1 9h1v1h-1zM1 10h1v1h-1zM1 11h1v1h-1z"/><path fill="#000000" d="M14 3h1v1h-1zM14 4h1v1h-1zM14 5h1v1h-1zM14 6h1v1h-1zM14 7h1v1h-1zM14 8h1v1h-1zM14 9h1v1h-1zM14 10h1v1h-1zM14 11h1v1h-1zM1 12h14v1h-14z"/></svg>
<div class="t" style="left:290px;top:498px;transform:scaleX(0.9931);">CN=Microsoft-Server-ActiveSync</div>
<div class="hl" style="left:264px;top:520px;width:5px"></div>
<div class="vl" style="left:258px;top:510px;height:6px"></div>
<div class="bx" style="left:254px;top:516px"><i></i><b></b></div>
<svg class="a" style="left:269px;top:512px" width="15" height="13" viewBox="0 0 15 13" shape-rendering="crispEdges"><path fill="#848284" d="M2 0h5v1h-5zM1 1h1v1h-1zM7 1h1v1h-1zM0 2h1v1h-1zM8 2h6v1h-6zM0 3h1v1h-1zM0 4h1v1h-1zM0 5h1v1h-1zM0 6h1v1h-1zM0 7h1v1h-1zM0 8h1v1h-1zM0 9h1v1h-1zM0 10h1v1h-1zM0 11h1v1h-1z"/><path fill="#CCCCAC" d="M2 1h1v1h-1zM4 1h1v1h-1zM6 1h1v1h-1zM3 3h1v1h-1zM5 3h1v1h-1zM7 3h1v1h-1zM9 3h1v1h-1zM11 3h1v1h-1zM13 3h1v1h-1zM2 4h1v1h-1zM4 4h1v1h-1zM6 4h1v1h-1zM8 4h1v1h-1zM10 4h1v1h-1zM12 4h1v1h-1zM3 5h1v1h-1zM5 5h1v1h-1zM7 5h1v1h-1zM9 5h1v1h-1zM11 5h1v1h-1zM13 5h1v1h-1zM2 6h1v1h-1zM4 6h1v1h-1zM6 6h1v1h-1zM8 6h1v1h-1zM10 6h1v1h-1zM12 6h1v1h-1zM3 7h1v1h-1zM5 7h1v1h-1zM7 7h1v1h-1zM9 7h1v1h-1zM11 7h1v1h-1zM13 7h1v1h-1zM2 8h1v1h-1zM4 8h1v1h-1zM6 8h1v1h-1zM8 8h1v1h-1zM10 8h1v1h-1zM12 8h1v1h-1zM3 9h1v1h-1zM5 9h1v1h-1zM7 9h1v1h-1zM9 9h1v1h-1zM11 9h1v1h-1zM13 9h1v1h-1zM2 10h1v1h-1zM4 10h1v1h-1zM6 10h1v1h-1zM8 10h1v1h-1zM10 10h1v1h-1zM12 10h1v1h-1zM3 11h1v1h-1zM5 11h1v1h-1zM7 11h1v1h-1zM9 11h1v1h-1zM11 11h1v1h-1zM13 11h1v1h-1z"/><path fill="#FFFF00" d="M3 1h1v1h-1zM5 1h1v1h-1zM2 3h1v1h-1zM4 3h1v1h-1zM6 3h1v1h-1zM8 3h1v1h-1zM10 3h1v1h-1zM12 3h1v1h-1zM3 4h1v1h-1zM5 4h1v1h-1zM7 4h1v1h-1zM9 4h1v1h-1zM11 4h1v1h-1zM13 4h1v1h-1zM2 5h1v1h-1zM4 5h1v1h-1zM6 5h1v1h-1zM8 5h1v1h-1zM10 5h1v1h-1zM12 5h1v1h-1zM3 6h1v1h-1zM5 6h1v1h-1zM7 6h1v1h-1zM9 6h1v1h-1zM11 6h1v1h-1zM13 6h1v1h-1zM2 7h1v1h-1zM4 7h1v1h-1zM6 7h1v1h-1zM8 7h1v1h-1zM10 7h1v1h-1zM12 7h1v1h-1zM3 8h1v1h-1zM5 8h1v1h-1zM7 8h1v1h-1zM9 8h1v1h-1zM11 8h1v1h-1zM13 8h1v1h-1zM2 9h1v1h-1zM4 9h1v1h-1zM6 9h1v1h-1zM8 9h1v1h-1zM10 9h1v1h-1zM12 9h1v1h-1zM3 10h1v1h-1zM5 10h1v1h-1zM7 10h1v1h-1zM9 10h1v1h-1zM11 10h1v1h-1zM13 10h1v1h-1zM2 11h1v1h-1zM4 11h1v1h-1zM6 11h1v1h-1zM8 11h1v1h-1zM10 11h1v1h-1zM12 11h1v1h-1z"/><path fill="#FFFFFF" d="M1 2h7v1h-7zM1 3h1v1h-1zM1 4h1v1h-1zM1 5h1v1h-1zM1 6h1v1h-1zM1 7h1v1h-1zM1 8h1v1h-1zM1 9h1v1h-1zM1 10h1v1h-1zM1 11h1v1h-1z"/><path fill="#000000" d="M14 3h1v1h-1zM14 4h1v1h-1zM14 5h1v1h-1zM14 6h1v1h-1zM14 7h1v1h-1zM14 8h1v1h-1zM14 9h1v1h-1zM14 10h1v1h-1zM14 11h1v1h-1zM1 12h14v1h-14z"/></svg>
<div class="t" style="left:290px;top:514px;transform:scaleX(0.8823);">CN=OMA</div>
<div class="vl" style="left:68px;top:174px;height:344px"></div>
<div class="vl" style="left:87px;top:189px;height:329px"></div>
<div class="vl" style="left:125px;top:269px;height:249px"></div>
<div class="vl" style="left:220px;top:446px;height:72px"></div>
</div>
<div class="a chk" style="left:422px;top:73px;width:16px;height:517px"></div>
<div class="sb" style="left:422px;top:73px"></div><div class="ar" style="left:426px;top:79px;border-top:0;border-bottom-color:#000"></div>
<div class="sb" style="left:422px;top:99px;height:311px"></div>
<div class="sb" style="left:422px;top:574px"></div><div class="ar" style="left:426px;top:580px;border-bottom:0;border-top-color:#000"></div>
<div class="a chk" style="left:2px;top:590px;width:420px;height:16px"></div>
<div class="sb" style="left:2px;top:590px"></div><div class="ar" style="left:7px;top:594px;border-left:0;border-right-color:#000"></div>
<div class="sb" style="left:18px;top:590px;width:359px"></div>
<div class="sb" style="left:406px;top:590px"></div><div class="ar" style="left:412px;top:594px;border-right:0;border-left-color:#000"></div>
<div class="a" style="left:422px;top:590px;width:16px;height:16px;background:#D6D3CE"></div>
<div class="a" style="left:443px;top:71px;width:420px;height:537px;background:#fff;border:1px solid;border-color:#848284 #fff #fff #848284;box-shadow:inset 1px 1px #424142,inset -1px -1px #D6D3CE"></div>
<div class="btn" style="left:445px;top:73px;width:200px;height:17px"></div>
<div class="btn" style="left:645px;top:73px;width:220px;height:17px"></div>
<div class="t" style="left:450.3px;top:76px;transform:scaleX(0.9440);">Name</div>
<svg class="a" style="left:449px;top:90px" width="17" height="17" viewBox="0 0 17 17" shape-rendering="crispEdges"><path fill="#848284" d="M11 0h2v1h-2zM7 1h2v1h-2zM6 2h1v1h-1zM5 3h1v1h-1zM4 4h1v1h-1zM3 5h1v1h-1zM2 6h1v1h-1zM1 7h1v1h-1zM0 8h1v1h-1zM9 16h1v1h-1z"/><path fill="#C6C3C6" d="M9 1h4v1h-4zM7 2h2v1h-2zM10 2h1v1h-1zM6 3h1v1h-1zM10 3h1v1h-1zM5 4h1v1h-1zM8 4h1v1h-1zM4 5h1v1h-1zM6 5h1v1h-1zM3 6h1v1h-1zM7 6h1v1h-1z"/><path fill="#000000" d="M13 1h1v1h-1zM12 2h1v1h-1zM11 3h1v1h-1zM10 4h1v1h-1zM14 4h1v1h-1zM9 5h1v1h-1zM14 5h1v1h-1zM8 6h1v1h-1zM14 6h1v1h-1zM2 7h6v1h-6zM12 7h1v1h-1zM14 7h1v1h-1zM14 8h1v1h-1zM1 9h1v1h-1zM13 9h1v1h-1zM2 10h2v1h-2zM9 10h1v1h-1zM13 10h1v1h-1zM15 10h1v1h-1zM4 11h2v1h-2zM11 11h2v1h-2zM15 11h1v1h-1zM6 12h2v1h-2zM10 12h1v1h-1zM14 12h1v1h-1zM8 13h3v1h-3zM13 13h1v1h-1zM10 14h3v1h-3zM10 15h1v1h-1z"/><path fill="#DCDCDC" d="M9 2h1v1h-1zM11 2h1v1h-1zM7 3h1v1h-1zM9 3h1v1h-1zM12 3h1v1h-1zM7 4h1v1h-1zM11 4h1v1h-1zM13 4h1v1h-1zM5 5h1v1h-1zM11 5h1v1h-1zM13 5h1v1h-1zM9 6h1v1h-1zM11 6h3v1h-3zM10 7h1v1h-1zM13 7h1v1h-1zM1 8h1v1h-1zM5 8h1v1h-1zM8 8h1v1h-1zM10 8h2v1h-2zM13 8h1v1h-1zM2 9h1v1h-1zM8 9h1v1h-1zM10 9h1v1h-1zM12 9h1v1h-1zM4 10h1v1h-1zM10 10h1v1h-1zM12 10h1v1h-1zM6 11h1v1h-1zM8 11h2v1h-2zM8 12h1v1h-1zM11 12h1v1h-1z"/><path fill="#FFFFFF" d="M8 3h1v1h-1zM13 3h1v1h-1zM6 4h1v1h-1zM12 5h1v1h-1zM10 6h1v1h-1zM8 7h1v1h-1zM11 7h1v1h-1zM2 8h1v1h-1zM6 8h1v1h-1zM9 8h1v1h-1zM12 8h1v1h-1zM3 9h1v1h-1zM7 9h1v1h-1zM9 9h1v1h-1zM11 9h1v1h-1zM5 10h1v1h-1zM11 10h1v1h-1zM7 11h1v1h-1zM10 11h1v1h-1zM9 12h1v1h-1z"/><path fill="#A0A0A0" d="M9 4h1v1h-1zM7 5h2v1h-2zM4 6h3v1h-3z"/><path fill="#FFFF00" d="M12 4h1v1h-1zM10 5h1v1h-1zM9 7h1v1h-1zM3 8h2v1h-2zM7 8h1v1h-1zM4 9h3v1h-3zM6 10h3v1h-3zM14 10h1v1h-1zM13 11h2v1h-2zM12 12h2v1h-2zM11 13h2v1h-2z"/><path fill="#840000" d="M15 9h2v1h-2zM16 10h1v1h-1z"/></svg>
<div class="t" style="left:467px;top:93px;transform:scaleX(0.9311);">ADSI Edit</div>
<div class="a" style="left:0;top:610px;width:839px;height:14px;border:1px solid;border-color:#848284 #fff #fff #848284"></div>
<div class="a" style="left:437px;top:112px;width:420px;height:448px;background:#D6D3CE;border:1px solid;border-color:#D6D3CE #424142 #424142 #D6D3CE;box-shadow:inset 1px 1px #fff,inset -1px -1px #848284"></div>
<div class="a" style="left:440px;top:115px;width:398px;height:18px;background:#08246B"></div>
<div class="t" style="left:441px;top:118px;font-weight:700;transform:scaleX(1.0587);color:#fff">CN=Exadmin Properties</div>
<div class="btn" style="left:802px;top:117px;width:16px;height:14px"></div><svg class="a" style="left:807px;top:119px" width="6" height="9" viewBox="0 0 6 9" shape-rendering="crispEdges"><path fill="#000000" d="M1 0h4v1h-4zM0 1h2v1h-2zM4 1h2v1h-2zM4 2h2v1h-2zM3 3h2v1h-2zM2 4h2v1h-2zM2 5h2v1h-2zM2 7h2v1h-2zM2 8h2v1h-2z"/></svg>
<div class="btn" style="left:820px;top:117px;width:16px;height:14px"></div>
<svg class="a" style="left:824px;top:120px" width="8" height="7" viewBox="0 0 8 7" shape-rendering="crispEdges"><path d="M0 0h2v1h1v1h2v-1h1v-1h2v1h-1v1h-1v1h-1v1h1v1h1v1h1v1h-2v-1h-1v-1h-2v1h-1v1h-2v-1h1v-1h1v-1h1v-1h-1v-1h-1v-1h-1z" fill="#000"/></svg>
<div class="a" style="left:446px;top:161px;width:386px;height:360px;border:1px solid;border-color:#fff #424142 #424142 #fff;box-shadow:inset -1px -1px #848284"></div>
<div class="a" style="left:446px;top:141px;width:85px;height:21px;background:#D6D3CE;border:1px solid;border-color:#fff #424142 transparent #fff;border-bottom:0;border-radius:2px 2px 0 0;box-shadow:inset -1px 0 #848284"></div>
<div class="a" style="left:531px;top:143px;width:48px;height:18px;background:#D6D3CE;border:1px solid;border-color:#fff #424142 transparent #fff;border-bottom:0;border-left:0;border-radius:0 2px 0 0;box-shadow:inset -1px 0 #848284"></div>
<div class="ms" style="left:454px;top:144px;transform:scaleX(0.8393);">Attribute Editor</div>
<div class="ms" style="left:535.3px;top:146px;transform:scaleX(0.8415);">Security</div>
<div class="sunk" style="left:461px;top:175px;width:13px;height:13px;background:#fff"></div><svg class="a" style="left:464px;top:178px" width="7" height="7" viewBox="0 0 7 7" shape-rendering="crispEdges"><path d="M0 2h1v1h1v1h1v-1h1v-1h1v-1h1v-1h1v3h-1v1h-1v1h-1v1h-1v1h-1v-1h-1v-1h-1z" fill="#000"/></svg>
<div class="ms" style="left:478.7px;top:175px;transform:scaleX(0.8426);">Show <u>m</u>andatory attributes</div>
<div class="sunk" style="left:461px;top:197px;width:13px;height:13px;background:#fff"></div><svg class="a" style="left:464px;top:200px" width="7" height="7" viewBox="0 0 7 7" shape-rendering="crispEdges"><path d="M0 2h1v1h1v1h1v-1h1v-1h1v-1h1v-1h1v3h-1v1h-1v1h-1v1h-1v1h-1v-1h-1v-1h-1z" fill="#000"/></svg>
<div class="ms" style="left:478.7px;top:197px;transform:scaleX(0.8507);">Show <u>o</u>ptional attributes</div>
<div class="sunk" style="left:461px;top:218px;width:13px;height:13px;background:#fff"></div>
<div class="ms" style="left:478.7px;top:218px;transform:scaleX(0.8562);">Show only attributes that have <u>v</u>alues</div>
<div class="ms" style="left:461px;top:238px;transform:scaleX(0.8120);">Attri<u>b</u>utes:</div>
<div class="sunk" style="left:461px;top:256px;width:357px;height:216px;background:#fff"></div>
<div class="btn" style="left:463px;top:258px;width:153px;height:17px"></div>
<div class="btn" style="left:616px;top:258px;width:90px;height:17px"></div>
<div class="btn" style="left:706px;top:258px;width:104px;height:17px"></div>
<div class="ms" style="left:469px;top:260px;transform:scaleX(0.8268);">Attribute</div><div class="ms" style="left:622px;top:260px;transform:scaleX(0.8347);">Syntax</div><div class="ms" style="left:712.3px;top:260px;transform:scaleX(0.8729);">Value</div>
<div class="a" style="left:463px;top:275px;width:337px;height:179px;overflow:hidden">
<div class="ms" style="left:6.5px;top:0px;transform:scaleX(0.8469);color:#000">msExchLogonMethod</div><div class="ms" style="left:158.7px;top:0px;transform:scaleX(0.8504);color:#000">Integer</div><div class="ms" style="left:249.5px;top:0px;transform:scaleX(0.7910);color:#000">3</div>
<div class="ms" style="left:6.5px;top:14px;transform:scaleX(0.8504);color:#000">msExchLogType</div><div class="ms" style="left:158.7px;top:14px;transform:scaleX(0.8504);color:#000">Integer</div><div class="ms" style="left:249.5px;top:14px;transform:scaleX(0.8313);color:#000">&lt;Not Set&gt;</div>
<div class="ms" style="left:6.5px;top:28px;transform:scaleX(0.8353);color:#000">msExchMaxIncomingConne...</div><div class="ms" style="left:158.7px;top:28px;transform:scaleX(0.8504);color:#000">Integer</div><div class="ms" style="left:249.5px;top:28px;transform:scaleX(0.8313);color:#000">&lt;Not Set&gt;</div>
<div class="ms" style="left:6.5px;top:42px;transform:scaleX(0.8284);color:#000">msExchMinAdminVersion</div><div class="ms" style="left:158.7px;top:42px;transform:scaleX(0.8504);color:#000">Integer</div><div class="ms" style="left:249.5px;top:42px;transform:scaleX(0.8615);color:#000">1694505316</div>
<div class="a" style="left:4px;top:56px;width:333px;height:14px;background:#08246B"></div>
<div class="a" style="left:4px;top:56px;width:333px;height:1px;background-image:linear-gradient(90deg,#F5DB95 50%,transparent 0);background-size:2px 1px"></div>
<div class="a" style="left:4px;top:69px;width:333px;height:1px;background-image:linear-gradient(90deg,transparent 50%,#F5DB95 0);background-size:2px 1px"></div>
<div class="a" style="left:4px;top:56px;width:1px;height:14px;background-image:linear-gradient(#F5DB95 50%,transparent 0);background-size:1px 2px"></div>
<div class="ms" style="left:6.5px;top:56px;transform:scaleX(0.8385);color:#fff">msExchSecureBindings</div><div class="ms" style="left:158.7px;top:56px;transform:scaleX(0.8585);color:#fff">Unicode String</div><div class="ms" style="left:249.5px;top:56px;transform:scaleX(0.8313);color:#fff">&lt;Not Set&gt;</div>
<div class="ms" style="left:6.5px;top:70px;transform:scaleX(0.8351);color:#000">msExchServerAutoStart</div><div class="ms" style="left:158.7px;top:70px;transform:scaleX(0.8567);color:#000">Boolean</div><div class="ms" style="left:249.5px;top:70px;transform:scaleX(0.8313);color:#000">&lt;Not Set&gt;</div>
<div class="ms" style="left:6.5px;top:84px;transform:scaleX(0.8327);color:#000">msExchServerBindings</div><div class="ms" style="left:158.7px;top:84px;transform:scaleX(0.8585);color:#000">Unicode String</div><div class="ms" style="left:249.5px;top:84px;transform:scaleX(0.8313);color:#000">&lt;Not Set&gt;</div>
<div class="ms" style="left:6.5px;top:98px;transform:scaleX(0.8403);color:#000">msExchServerRole</div><div class="ms" style="left:158.7px;top:98px;transform:scaleX(0.8504);color:#000">Integer</div><div class="ms" style="left:249.5px;top:98px;transform:scaleX(0.7910);color:#000">0</div>
<div class="ms" style="left:6.5px;top:112px;transform:scaleX(0.8353);color:#000">msExchUNCPassword</div><div class="ms" style="left:158.7px;top:112px;transform:scaleX(0.8585);color:#000">Unicode String</div><div class="ms" style="left:249.5px;top:112px;transform:scaleX(0.8313);color:#000">&lt;Not Set&gt;</div>
<div class="ms" style="left:6.5px;top:126px;transform:scaleX(0.8328);color:#000">msExchUNCUsername</div><div class="ms" style="left:158.7px;top:126px;transform:scaleX(0.8585);color:#000">Unicode String</div><div class="ms" style="left:249.5px;top:126px;transform:scaleX(0.8313);color:#000">&lt;Not Set&gt;</div>
<div class="ms" style="left:6.5px;top:140px;transform:scaleX(0.8350);color:#000">msExchUnmergedAttsPt</div><div class="ms" style="left:158.7px;top:140px;transform:scaleX(0.8545);color:#000">Octet String</div><div class="ms" style="left:249.5px;top:140px;transform:scaleX(0.8313);color:#000">&lt;Not Set&gt;</div>
<div class="ms" style="left:6.5px;top:154px;transform:scaleX(0.8152);color:#000">name</div><div class="ms" style="left:158.7px;top:154px;transform:scaleX(0.8585);color:#000">Unicode String</div><div class="ms" style="left:249.5px;top:154px;transform:scaleX(0.8141);color:#000">Exadmin</div>
<div class="ms" style="left:6.5px;top:168px;transform:scaleX(0.8379);color:#000">netbootSCPBL</div><div class="ms" style="left:158.7px;top:168px;transform:scaleX(0.8399);color:#000">Distinguished ...</div><div class="ms" style="left:249.5px;top:168px;transform:scaleX(0.8313);color:#000">&lt;Not Set&gt;</div>
</div>
<div class="a chk" style="left:800px;top:258px;width:16px;height:196px"></div>
<div class="sb" style="left:800px;top:258px"></div><div class="ar" style="left:804px;top:264px;border-top:0;border-bottom-color:#000"></div>
<div class="sb" style="left:800px;top:370px;height:14px"></div>
<div class="sb" style="left:800px;top:438px"></div><div class="ar" style="left:804px;top:444px;border-bottom:0;border-top-color:#000"></div>
<div class="a chk" style="left:463px;top:454px;width:337px;height:16px"></div>
<div class="sb" style="left:463px;top:454px"></div><div class="ar" style="left:468px;top:458px;border-left:0;border-right-color:#000"></div>
<div class="sb" style="left:479px;top:454px;width:160px"></div>
<div class="sb" style="left:784px;top:454px"></div><div class="ar" style="left:791px;top:458px;border-right:0;border-left-color:#000"></div>
<div class="a" style="left:800px;top:454px;width:16px;height:16px;background:#D6D3CE"></div>
<div class="btn" style="left:461px;top:483px;width:75px;height:23px"></div><div class="ms" style="left:489.2px;top:487px;transform:scaleX(0.8400);"><u>E</u>dit</div>
<div class="a" style="left:595px;top:527px;width:75px;height:23px;border:1px solid #000"></div><div class="btn" style="left:596px;top:528px;width:73px;height:21px"></div><div class="ms" style="left:625.6px;top:531px;transform:scaleX(0.7917);">OK</div>
<div class="btn" style="left:676px;top:527px;width:75px;height:23px"></div><div class="ms" style="left:697.0px;top:531px;transform:scaleX(0.8530);">Cancel</div>
<div class="btn" style="left:757px;top:527px;width:75px;height:23px"></div><div class="ms" style="left:781.5px;top:531px;transform:scaleX(0.8216);color:#848284;text-shadow:1px 1px #fff"><u>A</u>pply</div>
<svg class="a" style="left:0;top:0" width="839" height="622" viewBox="0 0 839 622">
<defs><filter id="ds" x="-20%" y="-20%" width="140%" height="140%"><feGaussianBlur in="SourceAlpha" stdDeviation="1.5"/><feOffset dx="-2" dy="-2.5"/><feComponentTransfer><feFuncA type="linear" slope=".5"/></feComponentTransfer><feMerge><feMergeNode/><feMergeNode in="SourceGraphic"/></feMerge></filter></defs>
<g filter="url(#ds)" fill="#1C6A73" stroke="#1C6A73">
<circle cx="688.5" cy="217.5" r="3.6" stroke="none"/>
<line x1="688.5" y1="217.5" x2="713.5" y2="309" stroke-width="4.1"/>
<polygon points="717.8,325 706.3,312.3 722.8,307.2" stroke="none"/>
<circle cx="664" cy="276.5" r="3.6" stroke="none"/>
<line x1="664" y1="276.5" x2="603.5" y2="322.3" stroke-width="4.1"/>
<polygon points="591.8,331.4 597.8,316.6 609.2,327.8" stroke="none"/>
</g>
<path d="M238 431 C240 428 246 429 252 430 C262 431.5 275 432 288 431 C300 430 308 427 314 425.5 C318 424.5 323 424.5 324 427 C325 430 322 432 318 433.5 C308 437 296 438.5 282 438.5 C268 438.5 254 438 246 436.5 C240 435.5 237 434 238 431 Z" fill="#BF4630"/>
</svg>
</div></body></html>
